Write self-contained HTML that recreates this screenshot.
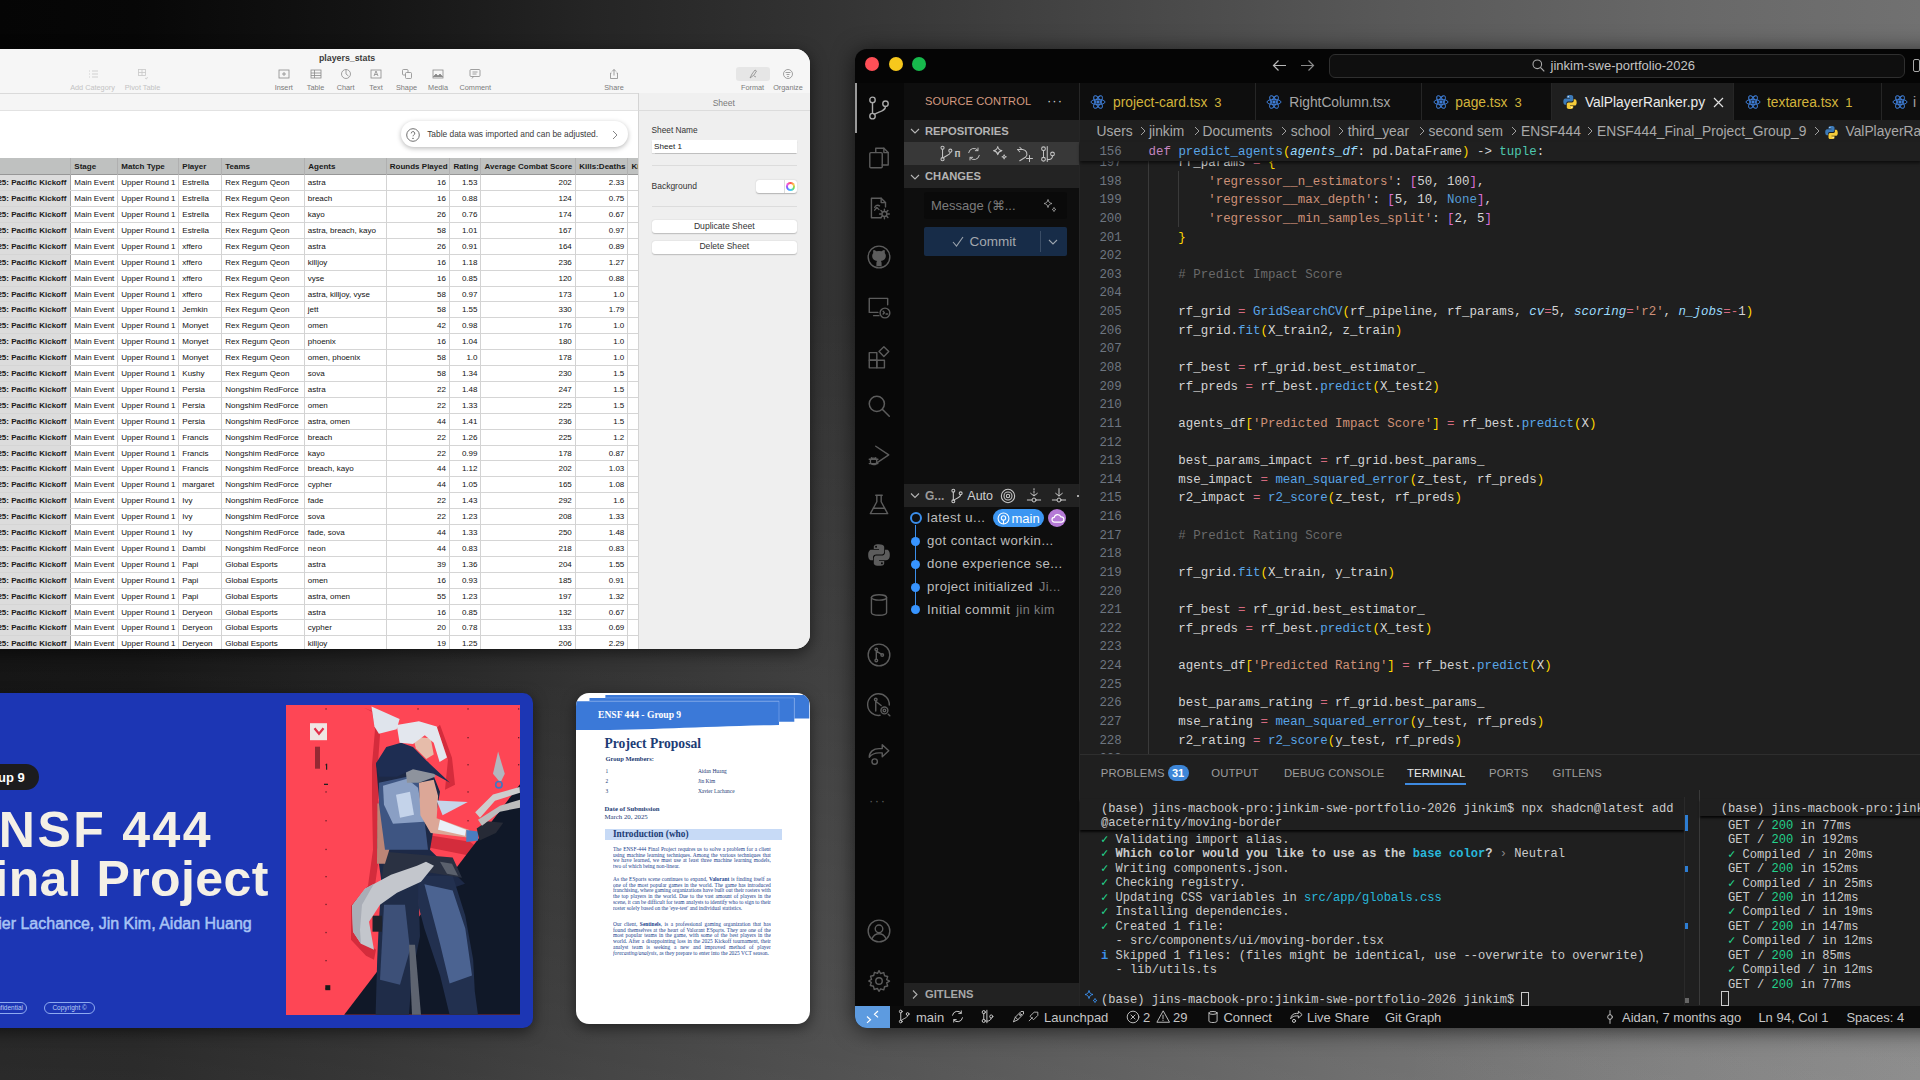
<!DOCTYPE html><html><head><meta charset="utf-8"><title>recreation</title><style>
*{margin:0;padding:0;box-sizing:border-box}
html,body{width:1920px;height:1080px;overflow:hidden}
body{position:relative;font-family:"Liberation Sans",sans-serif;
background:
 radial-gradient(ellipse 520px 320px at 1920px 1080px, rgba(200,200,200,0.12), rgba(200,200,200,0) 100%),
 linear-gradient(180deg, rgba(255,255,255,0) 0%, rgba(255,255,255,0) 28%, rgba(255,255,255,0.065) 62%, rgba(255,255,255,0.15) 100%),
 linear-gradient(90deg,#050505 0%,#070707 7%,#141414 19%,#252525 31%,#333 43%,#454545 57%,#585858 72%,#686868 88%,#717171 100%);}
.a{position:absolute;white-space:nowrap}
.w{position:absolute;overflow:hidden}
.nt{position:absolute;font-size:8px;color:#111;line-height:16px;white-space:nowrap}
.nh{position:absolute;font-size:8px;font-weight:bold;color:#1a1a1a;line-height:16px;white-space:nowrap}
.tl{position:absolute;font-size:7.3px;color:#7b7b7b;white-space:nowrap;transform:translateX(-50%)}
.code{position:absolute;font-family:"Liberation Mono",monospace;font-size:12.45px;line-height:18.63px;white-space:pre;color:#d4d4d4}
.ln{position:absolute;font-family:"Liberation Mono",monospace;font-size:12.45px;line-height:18.63px;color:#6e7681;text-align:right;width:40px;white-space:pre}
.term{position:absolute;font-family:"Liberation Mono",monospace;font-size:12.09px;line-height:14.5px;white-space:pre;color:#cccccc}
.ui{position:absolute;white-space:nowrap;font-family:"Liberation Sans",sans-serif}
svg{position:absolute;overflow:visible}
</style></head><body><div class="w" style="left:-30px;top:49px;width:839.5px;height:600px;background:#fff;border-radius:0 15px 15px 0;box-shadow:0 4px 16px rgba(0,0,0,0.55)"><div style="position:absolute;left:30px;top:0;width:809.5px;height:600px"><div class="a" style="left:0;top:0;width:810px;height:44.8px;background:#f6f6f6;border-bottom:1px solid #dadada"></div><div class="a" style="left:0;top:44.8px;width:810px;height:17.2px;background:#f5f5f5;border-bottom:1px solid #e2e2e2"></div><div class="a" style="left:319px;top:3.5px;font-size:8.8px;font-weight:bold;color:#3b3b3b">players_stats</div><div class="tl" style="left:92.5px;top:33.5px;color:#c3c3c3">Add Category</div><div class="tl" style="left:142.5px;top:33.5px;color:#c3c3c3">Pivot Table</div><div class="tl" style="left:283.75px;top:33.5px;color:#7b7b7b">Insert</div><div class="tl" style="left:315.5px;top:33.5px;color:#7b7b7b">Table</div><div class="tl" style="left:345.6px;top:33.5px;color:#7b7b7b">Chart</div><div class="tl" style="left:376px;top:33.5px;color:#7b7b7b">Text</div><div class="tl" style="left:406.5px;top:33.5px;color:#7b7b7b">Shape</div><div class="tl" style="left:438px;top:33.5px;color:#7b7b7b">Media</div><div class="tl" style="left:475.3px;top:33.5px;color:#7b7b7b">Comment</div><div class="tl" style="left:614px;top:33.5px;color:#7b7b7b">Share</div><div class="tl" style="left:752.5px;top:33.5px;color:#7b7b7b">Format</div><div class="tl" style="left:788px;top:33.5px;color:#7b7b7b">Organize</div><div class="a" style="left:735.5px;top:18px;width:34.5px;height:13.5px;background:#e6e6e6;border-radius:3px"></div><svg style="left:86.5px;top:18.6px" width="12" height="12" viewBox="0 0 12 12" fill="none" stroke="#c8c8c8" stroke-width="0.8"><path d="M2 3h1M5 3h6M2 6h1M5 6h6M2 9h1M5 9h6"/></svg><svg style="left:136.5px;top:18.6px" width="12" height="12" viewBox="0 0 12 12" fill="none" stroke="#c8c8c8" stroke-width="0.8"><rect x="1.5" y="1.5" width="7" height="6"/><path d="M1.5 4.5h7M5 1.5v6M8 10l1.5 1 1-2"/></svg><svg style="left:277.75px;top:18.6px" width="12" height="12" viewBox="0 0 12 12" fill="none" stroke="#8a8a8a" stroke-width="0.8"><rect x="1" y="2" width="10" height="8"/><path d="M6 4v4M4 6h4"/></svg><svg style="left:309.5px;top:18.6px" width="12" height="12" viewBox="0 0 12 12" fill="none" stroke="#8a8a8a" stroke-width="0.8"><rect x="1" y="2" width="10" height="8"/><path d="M1 5h10M1 7.5h10M4.5 2v8"/></svg><svg style="left:339.6px;top:18.6px" width="12" height="12" viewBox="0 0 12 12" fill="none" stroke="#8a8a8a" stroke-width="0.8"><circle cx="6" cy="6" r="4.5"/><path d="M6 1.5v4.5l2.5 2"/></svg><svg style="left:370px;top:18.6px" width="12" height="12" viewBox="0 0 12 12" fill="none" stroke="#8a8a8a" stroke-width="0.8"><rect x="1" y="2" width="10" height="8"/><path d="M4 8l2-5 2 5M4.7 6.5h2.6"/></svg><svg style="left:400.5px;top:18.6px" width="12" height="12" viewBox="0 0 12 12" fill="none" stroke="#8a8a8a" stroke-width="0.8"><rect x="1.5" y="1.5" width="5.5" height="5.5" rx="1"/><rect x="4.5" y="4.5" width="6" height="6" rx="1" fill="#f6f6f6"/></svg><svg style="left:432px;top:18.6px" width="12" height="12" viewBox="0 0 12 12" fill="none" stroke="#8a8a8a" stroke-width="0.8"><rect x="1" y="2" width="10" height="8"/><path d="M1 9l3-3 2 2 2-2 3 3" fill="#8a8a8a"/></svg><svg style="left:469.3px;top:18.6px" width="12" height="12" viewBox="0 0 12 12" fill="none" stroke="#8a8a8a" stroke-width="0.8"><rect x="1" y="1.5" width="10" height="7" rx="1"/><path d="M3 10.5l1.5-2M3.5 4h5M3.5 6h4"/></svg><svg style="left:608px;top:18.6px" width="12" height="12" viewBox="0 0 12 12" fill="none" stroke="#8a8a8a" stroke-width="0.8"><path d="M6 1.5v6M4 3.5l2-2 2 2M3.5 5H2.5v5.5h7V5H8.5"/></svg><svg style="left:746.5px;top:18.6px" width="12" height="12" viewBox="0 0 12 12" fill="none" stroke="#8a8a8a" stroke-width="0.8"><path d="M3 10l2-4 3-4 1.5 1-2.5 4z"/><path d="M7 8l2 1"/></svg><svg style="left:782px;top:18.6px" width="12" height="12" viewBox="0 0 12 12" fill="none" stroke="#8a8a8a" stroke-width="0.8"><circle cx="6" cy="6" r="4.5"/><path d="M3.5 4.5h5M4.5 6.5h3M5.2 8.5h1.6"/></svg><div class="a" style="left:400.6px;top:71.8px;width:227.7px;height:26.4px;background:#fff;border-radius:13.2px;box-shadow:0 1.5px 5px rgba(0,0,0,0.28)"></div><svg style="left:406.3px;top:79px" width="14" height="14" viewBox="0 0 14 14" fill="none" stroke="#707070" stroke-width="1"><circle cx="7" cy="7" r="6.3"/><path d="M5.2 5.4a1.8 1.8 0 1 1 2.6 1.6c-.6.3-.8.6-.8 1.3" /><circle cx="7" cy="10.3" r="0.35" fill="#707070"/></svg><div class="a" style="left:427.2px;top:79.5px;font-size:8.4px;color:#3a3a3a">Table data was imported and can be adjusted.</div><svg style="left:612px;top:80.5px" width="6" height="10" viewBox="0 0 6 10" fill="none" stroke="#777" stroke-width="0.9"><path d="M1 1l4 4-4 4"/></svg><div class="a" style="left:0;top:109px;width:640px;height:16.69999999999999px;background:#bfc1c0;border-bottom:1px solid #979797"></div><div class="a" style="left:0;top:125.69999999999999px;width:70.5px;height:474.3px;background:#dcdcdc;border-right:1px solid #a6a6a6"></div><div class="a" style="left:0;top:141.10px;width:640px;height:0.8px;background:#d5d5d5"></div><div class="a" style="left:0;top:157.00px;width:640px;height:0.8px;background:#d5d5d5"></div><div class="a" style="left:0;top:172.90px;width:640px;height:0.8px;background:#d5d5d5"></div><div class="a" style="left:0;top:188.80px;width:640px;height:0.8px;background:#d5d5d5"></div><div class="a" style="left:0;top:204.70px;width:640px;height:0.8px;background:#d5d5d5"></div><div class="a" style="left:0;top:220.60px;width:640px;height:0.8px;background:#d5d5d5"></div><div class="a" style="left:0;top:236.50px;width:640px;height:0.8px;background:#d5d5d5"></div><div class="a" style="left:0;top:252.40px;width:640px;height:0.8px;background:#d5d5d5"></div><div class="a" style="left:0;top:268.30px;width:640px;height:0.8px;background:#d5d5d5"></div><div class="a" style="left:0;top:284.20px;width:640px;height:0.8px;background:#d5d5d5"></div><div class="a" style="left:0;top:300.10px;width:640px;height:0.8px;background:#d5d5d5"></div><div class="a" style="left:0;top:316.00px;width:640px;height:0.8px;background:#d5d5d5"></div><div class="a" style="left:0;top:331.90px;width:640px;height:0.8px;background:#d5d5d5"></div><div class="a" style="left:0;top:347.80px;width:640px;height:0.8px;background:#d5d5d5"></div><div class="a" style="left:0;top:363.70px;width:640px;height:0.8px;background:#d5d5d5"></div><div class="a" style="left:0;top:379.60px;width:640px;height:0.8px;background:#d5d5d5"></div><div class="a" style="left:0;top:395.50px;width:640px;height:0.8px;background:#d5d5d5"></div><div class="a" style="left:0;top:411.40px;width:640px;height:0.8px;background:#d5d5d5"></div><div class="a" style="left:0;top:427.30px;width:640px;height:0.8px;background:#d5d5d5"></div><div class="a" style="left:0;top:443.20px;width:640px;height:0.8px;background:#d5d5d5"></div><div class="a" style="left:0;top:459.10px;width:640px;height:0.8px;background:#d5d5d5"></div><div class="a" style="left:0;top:475.00px;width:640px;height:0.8px;background:#d5d5d5"></div><div class="a" style="left:0;top:490.90px;width:640px;height:0.8px;background:#d5d5d5"></div><div class="a" style="left:0;top:506.80px;width:640px;height:0.8px;background:#d5d5d5"></div><div class="a" style="left:0;top:522.70px;width:640px;height:0.8px;background:#d5d5d5"></div><div class="a" style="left:0;top:538.60px;width:640px;height:0.8px;background:#d5d5d5"></div><div class="a" style="left:0;top:554.50px;width:640px;height:0.8px;background:#d5d5d5"></div><div class="a" style="left:0;top:570.40px;width:640px;height:0.8px;background:#d5d5d5"></div><div class="a" style="left:0;top:586.30px;width:640px;height:0.8px;background:#d5d5d5"></div><div class="a" style="left:0;top:602.20px;width:640px;height:0.8px;background:#d5d5d5"></div><div class="a" style="left:117.0px;top:109px;width:0.8px;height:491px;background:#d3d3d3"></div><div class="a" style="left:178.0px;top:109px;width:0.8px;height:491px;background:#d3d3d3"></div><div class="a" style="left:221.0px;top:109px;width:0.8px;height:491px;background:#d3d3d3"></div><div class="a" style="left:304.0px;top:109px;width:0.8px;height:491px;background:#d3d3d3"></div><div class="a" style="left:385.5px;top:109px;width:0.8px;height:491px;background:#d3d3d3"></div><div class="a" style="left:449.1px;top:109px;width:0.8px;height:491px;background:#d3d3d3"></div><div class="a" style="left:480.2px;top:109px;width:0.8px;height:491px;background:#d3d3d3"></div><div class="a" style="left:575.0px;top:109px;width:0.8px;height:491px;background:#d3d3d3"></div><div class="a" style="left:627.1px;top:109px;width:0.8px;height:491px;background:#d3d3d3"></div><div class="a" style="left:70.0px;top:109px;width:0.8px;height:16.69999999999999px;background:#b0b0b0"></div><div class="a" style="left:117.0px;top:109px;width:0.8px;height:16.69999999999999px;background:#b0b0b0"></div><div class="a" style="left:178.0px;top:109px;width:0.8px;height:16.69999999999999px;background:#b0b0b0"></div><div class="a" style="left:221.0px;top:109px;width:0.8px;height:16.69999999999999px;background:#b0b0b0"></div><div class="a" style="left:304.0px;top:109px;width:0.8px;height:16.69999999999999px;background:#b0b0b0"></div><div class="a" style="left:385.5px;top:109px;width:0.8px;height:16.69999999999999px;background:#b0b0b0"></div><div class="a" style="left:449.1px;top:109px;width:0.8px;height:16.69999999999999px;background:#b0b0b0"></div><div class="a" style="left:480.2px;top:109px;width:0.8px;height:16.69999999999999px;background:#b0b0b0"></div><div class="a" style="left:575.0px;top:109px;width:0.8px;height:16.69999999999999px;background:#b0b0b0"></div><div class="a" style="left:627.1px;top:109px;width:0.8px;height:16.69999999999999px;background:#b0b0b0"></div><div class="nh" style="left:74.3px;top:110.2px">Stage</div><div class="nh" style="left:121.3px;top:110.2px">Match Type</div><div class="nh" style="left:182.3px;top:110.2px">Player</div><div class="nh" style="left:225.3px;top:110.2px">Teams</div><div class="nh" style="left:308.3px;top:110.2px">Agents</div><div class="nh" style="left:389.8px;top:110.2px">Rounds Played</div><div class="nh" style="left:453.40000000000003px;top:110.2px">Rating</div><div class="nh" style="left:484.5px;top:110.2px">Average Combat Score</div><div class="nh" style="left:579.3px;top:110.2px">Kills:Deaths</div><div class="nh" style="left:631.4px;top:110.2px">Kills</div><div class="nh" style="right:743.2px;top:126.19999999999999px">VCT 2025: Pacific Kickoff</div><div class="nt" style="left:74.3px;top:126.19999999999999px">Main Event</div><div class="nt" style="left:121.3px;top:126.19999999999999px">Upper Round 1</div><div class="nt" style="left:182.3px;top:126.19999999999999px">Estrella</div><div class="nt" style="left:225.3px;top:126.19999999999999px">Rex Regum Qeon</div><div class="nt" style="left:307.8px;top:126.19999999999999px">astra</div><div class="nt" style="right:363.5px;top:126.19999999999999px">16</div><div class="nt" style="right:332.0px;top:126.19999999999999px">1.53</div><div class="nt" style="right:237.70000000000005px;top:126.19999999999999px">202</div><div class="nt" style="right:185.20000000000005px;top:126.19999999999999px">2.33</div><div class="nh" style="right:743.2px;top:142.1px">VCT 2025: Pacific Kickoff</div><div class="nt" style="left:74.3px;top:142.1px">Main Event</div><div class="nt" style="left:121.3px;top:142.1px">Upper Round 1</div><div class="nt" style="left:182.3px;top:142.1px">Estrella</div><div class="nt" style="left:225.3px;top:142.1px">Rex Regum Qeon</div><div class="nt" style="left:307.8px;top:142.1px">breach</div><div class="nt" style="right:363.5px;top:142.1px">16</div><div class="nt" style="right:332.0px;top:142.1px">0.88</div><div class="nt" style="right:237.70000000000005px;top:142.1px">124</div><div class="nt" style="right:185.20000000000005px;top:142.1px">0.75</div><div class="nh" style="right:743.2px;top:158.0px">VCT 2025: Pacific Kickoff</div><div class="nt" style="left:74.3px;top:158.0px">Main Event</div><div class="nt" style="left:121.3px;top:158.0px">Upper Round 1</div><div class="nt" style="left:182.3px;top:158.0px">Estrella</div><div class="nt" style="left:225.3px;top:158.0px">Rex Regum Qeon</div><div class="nt" style="left:307.8px;top:158.0px">kayo</div><div class="nt" style="right:363.5px;top:158.0px">26</div><div class="nt" style="right:332.0px;top:158.0px">0.76</div><div class="nt" style="right:237.70000000000005px;top:158.0px">174</div><div class="nt" style="right:185.20000000000005px;top:158.0px">0.67</div><div class="nh" style="right:743.2px;top:173.89999999999998px">VCT 2025: Pacific Kickoff</div><div class="nt" style="left:74.3px;top:173.89999999999998px">Main Event</div><div class="nt" style="left:121.3px;top:173.89999999999998px">Upper Round 1</div><div class="nt" style="left:182.3px;top:173.89999999999998px">Estrella</div><div class="nt" style="left:225.3px;top:173.89999999999998px">Rex Regum Qeon</div><div class="nt" style="left:307.8px;top:173.89999999999998px">astra, breach, kayo</div><div class="nt" style="right:363.5px;top:173.89999999999998px">58</div><div class="nt" style="right:332.0px;top:173.89999999999998px">1.01</div><div class="nt" style="right:237.70000000000005px;top:173.89999999999998px">167</div><div class="nt" style="right:185.20000000000005px;top:173.89999999999998px">0.97</div><div class="nh" style="right:743.2px;top:189.79999999999998px">VCT 2025: Pacific Kickoff</div><div class="nt" style="left:74.3px;top:189.79999999999998px">Main Event</div><div class="nt" style="left:121.3px;top:189.79999999999998px">Upper Round 1</div><div class="nt" style="left:182.3px;top:189.79999999999998px">xffero</div><div class="nt" style="left:225.3px;top:189.79999999999998px">Rex Regum Qeon</div><div class="nt" style="left:307.8px;top:189.79999999999998px">astra</div><div class="nt" style="right:363.5px;top:189.79999999999998px">26</div><div class="nt" style="right:332.0px;top:189.79999999999998px">0.91</div><div class="nt" style="right:237.70000000000005px;top:189.79999999999998px">164</div><div class="nt" style="right:185.20000000000005px;top:189.79999999999998px">0.89</div><div class="nh" style="right:743.2px;top:205.7px">VCT 2025: Pacific Kickoff</div><div class="nt" style="left:74.3px;top:205.7px">Main Event</div><div class="nt" style="left:121.3px;top:205.7px">Upper Round 1</div><div class="nt" style="left:182.3px;top:205.7px">xffero</div><div class="nt" style="left:225.3px;top:205.7px">Rex Regum Qeon</div><div class="nt" style="left:307.8px;top:205.7px">killjoy</div><div class="nt" style="right:363.5px;top:205.7px">16</div><div class="nt" style="right:332.0px;top:205.7px">1.18</div><div class="nt" style="right:237.70000000000005px;top:205.7px">236</div><div class="nt" style="right:185.20000000000005px;top:205.7px">1.27</div><div class="nh" style="right:743.2px;top:221.6px">VCT 2025: Pacific Kickoff</div><div class="nt" style="left:74.3px;top:221.6px">Main Event</div><div class="nt" style="left:121.3px;top:221.6px">Upper Round 1</div><div class="nt" style="left:182.3px;top:221.6px">xffero</div><div class="nt" style="left:225.3px;top:221.6px">Rex Regum Qeon</div><div class="nt" style="left:307.8px;top:221.6px">vyse</div><div class="nt" style="right:363.5px;top:221.6px">16</div><div class="nt" style="right:332.0px;top:221.6px">0.85</div><div class="nt" style="right:237.70000000000005px;top:221.6px">120</div><div class="nt" style="right:185.20000000000005px;top:221.6px">0.88</div><div class="nh" style="right:743.2px;top:237.5px">VCT 2025: Pacific Kickoff</div><div class="nt" style="left:74.3px;top:237.5px">Main Event</div><div class="nt" style="left:121.3px;top:237.5px">Upper Round 1</div><div class="nt" style="left:182.3px;top:237.5px">xffero</div><div class="nt" style="left:225.3px;top:237.5px">Rex Regum Qeon</div><div class="nt" style="left:307.8px;top:237.5px">astra, killjoy, vyse</div><div class="nt" style="right:363.5px;top:237.5px">58</div><div class="nt" style="right:332.0px;top:237.5px">0.97</div><div class="nt" style="right:237.70000000000005px;top:237.5px">173</div><div class="nt" style="right:185.20000000000005px;top:237.5px">1.0</div><div class="nh" style="right:743.2px;top:253.39999999999998px">VCT 2025: Pacific Kickoff</div><div class="nt" style="left:74.3px;top:253.39999999999998px">Main Event</div><div class="nt" style="left:121.3px;top:253.39999999999998px">Upper Round 1</div><div class="nt" style="left:182.3px;top:253.39999999999998px">Jemkin</div><div class="nt" style="left:225.3px;top:253.39999999999998px">Rex Regum Qeon</div><div class="nt" style="left:307.8px;top:253.39999999999998px">jett</div><div class="nt" style="right:363.5px;top:253.39999999999998px">58</div><div class="nt" style="right:332.0px;top:253.39999999999998px">1.55</div><div class="nt" style="right:237.70000000000005px;top:253.39999999999998px">330</div><div class="nt" style="right:185.20000000000005px;top:253.39999999999998px">1.79</div><div class="nh" style="right:743.2px;top:269.29999999999995px">VCT 2025: Pacific Kickoff</div><div class="nt" style="left:74.3px;top:269.29999999999995px">Main Event</div><div class="nt" style="left:121.3px;top:269.29999999999995px">Upper Round 1</div><div class="nt" style="left:182.3px;top:269.29999999999995px">Monyet</div><div class="nt" style="left:225.3px;top:269.29999999999995px">Rex Regum Qeon</div><div class="nt" style="left:307.8px;top:269.29999999999995px">omen</div><div class="nt" style="right:363.5px;top:269.29999999999995px">42</div><div class="nt" style="right:332.0px;top:269.29999999999995px">0.98</div><div class="nt" style="right:237.70000000000005px;top:269.29999999999995px">176</div><div class="nt" style="right:185.20000000000005px;top:269.29999999999995px">1.0</div><div class="nh" style="right:743.2px;top:285.2px">VCT 2025: Pacific Kickoff</div><div class="nt" style="left:74.3px;top:285.2px">Main Event</div><div class="nt" style="left:121.3px;top:285.2px">Upper Round 1</div><div class="nt" style="left:182.3px;top:285.2px">Monyet</div><div class="nt" style="left:225.3px;top:285.2px">Rex Regum Qeon</div><div class="nt" style="left:307.8px;top:285.2px">phoenix</div><div class="nt" style="right:363.5px;top:285.2px">16</div><div class="nt" style="right:332.0px;top:285.2px">1.04</div><div class="nt" style="right:237.70000000000005px;top:285.2px">180</div><div class="nt" style="right:185.20000000000005px;top:285.2px">1.0</div><div class="nh" style="right:743.2px;top:301.1px">VCT 2025: Pacific Kickoff</div><div class="nt" style="left:74.3px;top:301.1px">Main Event</div><div class="nt" style="left:121.3px;top:301.1px">Upper Round 1</div><div class="nt" style="left:182.3px;top:301.1px">Monyet</div><div class="nt" style="left:225.3px;top:301.1px">Rex Regum Qeon</div><div class="nt" style="left:307.8px;top:301.1px">omen, phoenix</div><div class="nt" style="right:363.5px;top:301.1px">58</div><div class="nt" style="right:332.0px;top:301.1px">1.0</div><div class="nt" style="right:237.70000000000005px;top:301.1px">178</div><div class="nt" style="right:185.20000000000005px;top:301.1px">1.0</div><div class="nh" style="right:743.2px;top:317.0px">VCT 2025: Pacific Kickoff</div><div class="nt" style="left:74.3px;top:317.0px">Main Event</div><div class="nt" style="left:121.3px;top:317.0px">Upper Round 1</div><div class="nt" style="left:182.3px;top:317.0px">Kushy</div><div class="nt" style="left:225.3px;top:317.0px">Rex Regum Qeon</div><div class="nt" style="left:307.8px;top:317.0px">sova</div><div class="nt" style="right:363.5px;top:317.0px">58</div><div class="nt" style="right:332.0px;top:317.0px">1.34</div><div class="nt" style="right:237.70000000000005px;top:317.0px">230</div><div class="nt" style="right:185.20000000000005px;top:317.0px">1.5</div><div class="nh" style="right:743.2px;top:332.9px">VCT 2025: Pacific Kickoff</div><div class="nt" style="left:74.3px;top:332.9px">Main Event</div><div class="nt" style="left:121.3px;top:332.9px">Upper Round 1</div><div class="nt" style="left:182.3px;top:332.9px">Persia</div><div class="nt" style="left:225.3px;top:332.9px">Nongshim RedForce</div><div class="nt" style="left:307.8px;top:332.9px">astra</div><div class="nt" style="right:363.5px;top:332.9px">22</div><div class="nt" style="right:332.0px;top:332.9px">1.48</div><div class="nt" style="right:237.70000000000005px;top:332.9px">247</div><div class="nt" style="right:185.20000000000005px;top:332.9px">1.5</div><div class="nh" style="right:743.2px;top:348.79999999999995px">VCT 2025: Pacific Kickoff</div><div class="nt" style="left:74.3px;top:348.79999999999995px">Main Event</div><div class="nt" style="left:121.3px;top:348.79999999999995px">Upper Round 1</div><div class="nt" style="left:182.3px;top:348.79999999999995px">Persia</div><div class="nt" style="left:225.3px;top:348.79999999999995px">Nongshim RedForce</div><div class="nt" style="left:307.8px;top:348.79999999999995px">omen</div><div class="nt" style="right:363.5px;top:348.79999999999995px">22</div><div class="nt" style="right:332.0px;top:348.79999999999995px">1.33</div><div class="nt" style="right:237.70000000000005px;top:348.79999999999995px">225</div><div class="nt" style="right:185.20000000000005px;top:348.79999999999995px">1.5</div><div class="nh" style="right:743.2px;top:364.7px">VCT 2025: Pacific Kickoff</div><div class="nt" style="left:74.3px;top:364.7px">Main Event</div><div class="nt" style="left:121.3px;top:364.7px">Upper Round 1</div><div class="nt" style="left:182.3px;top:364.7px">Persia</div><div class="nt" style="left:225.3px;top:364.7px">Nongshim RedForce</div><div class="nt" style="left:307.8px;top:364.7px">astra, omen</div><div class="nt" style="right:363.5px;top:364.7px">44</div><div class="nt" style="right:332.0px;top:364.7px">1.41</div><div class="nt" style="right:237.70000000000005px;top:364.7px">236</div><div class="nt" style="right:185.20000000000005px;top:364.7px">1.5</div><div class="nh" style="right:743.2px;top:380.6px">VCT 2025: Pacific Kickoff</div><div class="nt" style="left:74.3px;top:380.6px">Main Event</div><div class="nt" style="left:121.3px;top:380.6px">Upper Round 1</div><div class="nt" style="left:182.3px;top:380.6px">Francis</div><div class="nt" style="left:225.3px;top:380.6px">Nongshim RedForce</div><div class="nt" style="left:307.8px;top:380.6px">breach</div><div class="nt" style="right:363.5px;top:380.6px">22</div><div class="nt" style="right:332.0px;top:380.6px">1.26</div><div class="nt" style="right:237.70000000000005px;top:380.6px">225</div><div class="nt" style="right:185.20000000000005px;top:380.6px">1.2</div><div class="nh" style="right:743.2px;top:396.5px">VCT 2025: Pacific Kickoff</div><div class="nt" style="left:74.3px;top:396.5px">Main Event</div><div class="nt" style="left:121.3px;top:396.5px">Upper Round 1</div><div class="nt" style="left:182.3px;top:396.5px">Francis</div><div class="nt" style="left:225.3px;top:396.5px">Nongshim RedForce</div><div class="nt" style="left:307.8px;top:396.5px">kayo</div><div class="nt" style="right:363.5px;top:396.5px">22</div><div class="nt" style="right:332.0px;top:396.5px">0.99</div><div class="nt" style="right:237.70000000000005px;top:396.5px">178</div><div class="nt" style="right:185.20000000000005px;top:396.5px">0.87</div><div class="nh" style="right:743.2px;top:412.4px">VCT 2025: Pacific Kickoff</div><div class="nt" style="left:74.3px;top:412.4px">Main Event</div><div class="nt" style="left:121.3px;top:412.4px">Upper Round 1</div><div class="nt" style="left:182.3px;top:412.4px">Francis</div><div class="nt" style="left:225.3px;top:412.4px">Nongshim RedForce</div><div class="nt" style="left:307.8px;top:412.4px">breach, kayo</div><div class="nt" style="right:363.5px;top:412.4px">44</div><div class="nt" style="right:332.0px;top:412.4px">1.12</div><div class="nt" style="right:237.70000000000005px;top:412.4px">202</div><div class="nt" style="right:185.20000000000005px;top:412.4px">1.03</div><div class="nh" style="right:743.2px;top:428.3px">VCT 2025: Pacific Kickoff</div><div class="nt" style="left:74.3px;top:428.3px">Main Event</div><div class="nt" style="left:121.3px;top:428.3px">Upper Round 1</div><div class="nt" style="left:182.3px;top:428.3px">margaret</div><div class="nt" style="left:225.3px;top:428.3px">Nongshim RedForce</div><div class="nt" style="left:307.8px;top:428.3px">cypher</div><div class="nt" style="right:363.5px;top:428.3px">44</div><div class="nt" style="right:332.0px;top:428.3px">1.05</div><div class="nt" style="right:237.70000000000005px;top:428.3px">165</div><div class="nt" style="right:185.20000000000005px;top:428.3px">1.08</div><div class="nh" style="right:743.2px;top:444.2px">VCT 2025: Pacific Kickoff</div><div class="nt" style="left:74.3px;top:444.2px">Main Event</div><div class="nt" style="left:121.3px;top:444.2px">Upper Round 1</div><div class="nt" style="left:182.3px;top:444.2px">Ivy</div><div class="nt" style="left:225.3px;top:444.2px">Nongshim RedForce</div><div class="nt" style="left:307.8px;top:444.2px">fade</div><div class="nt" style="right:363.5px;top:444.2px">22</div><div class="nt" style="right:332.0px;top:444.2px">1.43</div><div class="nt" style="right:237.70000000000005px;top:444.2px">292</div><div class="nt" style="right:185.20000000000005px;top:444.2px">1.6</div><div class="nh" style="right:743.2px;top:460.1px">VCT 2025: Pacific Kickoff</div><div class="nt" style="left:74.3px;top:460.1px">Main Event</div><div class="nt" style="left:121.3px;top:460.1px">Upper Round 1</div><div class="nt" style="left:182.3px;top:460.1px">Ivy</div><div class="nt" style="left:225.3px;top:460.1px">Nongshim RedForce</div><div class="nt" style="left:307.8px;top:460.1px">sova</div><div class="nt" style="right:363.5px;top:460.1px">22</div><div class="nt" style="right:332.0px;top:460.1px">1.23</div><div class="nt" style="right:237.70000000000005px;top:460.1px">208</div><div class="nt" style="right:185.20000000000005px;top:460.1px">1.33</div><div class="nh" style="right:743.2px;top:476.0px">VCT 2025: Pacific Kickoff</div><div class="nt" style="left:74.3px;top:476.0px">Main Event</div><div class="nt" style="left:121.3px;top:476.0px">Upper Round 1</div><div class="nt" style="left:182.3px;top:476.0px">Ivy</div><div class="nt" style="left:225.3px;top:476.0px">Nongshim RedForce</div><div class="nt" style="left:307.8px;top:476.0px">fade, sova</div><div class="nt" style="right:363.5px;top:476.0px">44</div><div class="nt" style="right:332.0px;top:476.0px">1.33</div><div class="nt" style="right:237.70000000000005px;top:476.0px">250</div><div class="nt" style="right:185.20000000000005px;top:476.0px">1.48</div><div class="nh" style="right:743.2px;top:491.9px">VCT 2025: Pacific Kickoff</div><div class="nt" style="left:74.3px;top:491.9px">Main Event</div><div class="nt" style="left:121.3px;top:491.9px">Upper Round 1</div><div class="nt" style="left:182.3px;top:491.9px">Dambi</div><div class="nt" style="left:225.3px;top:491.9px">Nongshim RedForce</div><div class="nt" style="left:307.8px;top:491.9px">neon</div><div class="nt" style="right:363.5px;top:491.9px">44</div><div class="nt" style="right:332.0px;top:491.9px">0.83</div><div class="nt" style="right:237.70000000000005px;top:491.9px">218</div><div class="nt" style="right:185.20000000000005px;top:491.9px">0.83</div><div class="nh" style="right:743.2px;top:507.8px">VCT 2025: Pacific Kickoff</div><div class="nt" style="left:74.3px;top:507.8px">Main Event</div><div class="nt" style="left:121.3px;top:507.8px">Upper Round 1</div><div class="nt" style="left:182.3px;top:507.8px">Papi</div><div class="nt" style="left:225.3px;top:507.8px">Global Esports</div><div class="nt" style="left:307.8px;top:507.8px">astra</div><div class="nt" style="right:363.5px;top:507.8px">39</div><div class="nt" style="right:332.0px;top:507.8px">1.36</div><div class="nt" style="right:237.70000000000005px;top:507.8px">204</div><div class="nt" style="right:185.20000000000005px;top:507.8px">1.55</div><div class="nh" style="right:743.2px;top:523.7px">VCT 2025: Pacific Kickoff</div><div class="nt" style="left:74.3px;top:523.7px">Main Event</div><div class="nt" style="left:121.3px;top:523.7px">Upper Round 1</div><div class="nt" style="left:182.3px;top:523.7px">Papi</div><div class="nt" style="left:225.3px;top:523.7px">Global Esports</div><div class="nt" style="left:307.8px;top:523.7px">omen</div><div class="nt" style="right:363.5px;top:523.7px">16</div><div class="nt" style="right:332.0px;top:523.7px">0.93</div><div class="nt" style="right:237.70000000000005px;top:523.7px">185</div><div class="nt" style="right:185.20000000000005px;top:523.7px">0.91</div><div class="nh" style="right:743.2px;top:539.6px">VCT 2025: Pacific Kickoff</div><div class="nt" style="left:74.3px;top:539.6px">Main Event</div><div class="nt" style="left:121.3px;top:539.6px">Upper Round 1</div><div class="nt" style="left:182.3px;top:539.6px">Papi</div><div class="nt" style="left:225.3px;top:539.6px">Global Esports</div><div class="nt" style="left:307.8px;top:539.6px">astra, omen</div><div class="nt" style="right:363.5px;top:539.6px">55</div><div class="nt" style="right:332.0px;top:539.6px">1.23</div><div class="nt" style="right:237.70000000000005px;top:539.6px">197</div><div class="nt" style="right:185.20000000000005px;top:539.6px">1.32</div><div class="nh" style="right:743.2px;top:555.5px">VCT 2025: Pacific Kickoff</div><div class="nt" style="left:74.3px;top:555.5px">Main Event</div><div class="nt" style="left:121.3px;top:555.5px">Upper Round 1</div><div class="nt" style="left:182.3px;top:555.5px">Deryeon</div><div class="nt" style="left:225.3px;top:555.5px">Global Esports</div><div class="nt" style="left:307.8px;top:555.5px">astra</div><div class="nt" style="right:363.5px;top:555.5px">16</div><div class="nt" style="right:332.0px;top:555.5px">0.85</div><div class="nt" style="right:237.70000000000005px;top:555.5px">132</div><div class="nt" style="right:185.20000000000005px;top:555.5px">0.67</div><div class="nh" style="right:743.2px;top:571.4px">VCT 2025: Pacific Kickoff</div><div class="nt" style="left:74.3px;top:571.4px">Main Event</div><div class="nt" style="left:121.3px;top:571.4px">Upper Round 1</div><div class="nt" style="left:182.3px;top:571.4px">Deryeon</div><div class="nt" style="left:225.3px;top:571.4px">Global Esports</div><div class="nt" style="left:307.8px;top:571.4px">cypher</div><div class="nt" style="right:363.5px;top:571.4px">20</div><div class="nt" style="right:332.0px;top:571.4px">0.78</div><div class="nt" style="right:237.70000000000005px;top:571.4px">133</div><div class="nt" style="right:185.20000000000005px;top:571.4px">0.69</div><div class="nh" style="right:743.2px;top:587.3px">VCT 2025: Pacific Kickoff</div><div class="nt" style="left:74.3px;top:587.3px">Main Event</div><div class="nt" style="left:121.3px;top:587.3px">Upper Round 1</div><div class="nt" style="left:182.3px;top:587.3px">Deryeon</div><div class="nt" style="left:225.3px;top:587.3px">Global Esports</div><div class="nt" style="left:307.8px;top:587.3px">killjoy</div><div class="nt" style="right:363.5px;top:587.3px">19</div><div class="nt" style="right:332.0px;top:587.3px">1.25</div><div class="nt" style="right:237.70000000000005px;top:587.3px">206</div><div class="nt" style="right:185.20000000000005px;top:587.3px">2.29</div><div class="a" style="left:638.4px;top:44px;width:172px;height:556px;background:#efefef;border-left:1px solid #d4d4d4"></div><div class="a" style="left:638.4px;top:44px;width:172px;height:18px;border-bottom:1px solid #dcdcdc;border-left:1px solid #d4d4d4;background:#f0f0f0"></div><div class="a" style="left:712.7px;top:48.6px;font-size:8.5px;color:#7a7a7a">Sheet</div><div class="a" style="left:651.5px;top:75.5px;font-size:8.3px;color:#333">Sheet Name</div><div class="a" style="left:651.5px;top:91px;width:145px;height:12.6px;background:#fff;box-shadow:0 0.5px 1px rgba(0,0,0,0.2)"></div><div class="a" style="left:654px;top:92.6px;font-size:8.1px;color:#222">Sheet 1</div><div class="a" style="left:651.5px;top:116px;width:145.5px;height:1px;background:#dcdcdc"></div><div class="a" style="left:651.5px;top:132.4px;font-size:8.5px;color:#333">Background</div><div class="a" style="left:755.5px;top:131px;width:41px;height:12.8px;background:#fff;border-radius:3px;box-shadow:0 0.5px 1.2px rgba(0,0,0,0.25)"></div><div class="a" style="left:783.5px;top:131px;width:0.6px;height:12.8px;background:#ddd"></div><div class="a" style="left:785.5px;top:132.5px;width:9.5px;height:9.5px;border-radius:50%;background:conic-gradient(#f55,#fc4,#6d6,#4cf,#66f,#e5e,#f55)"></div><div class="a" style="left:787.6px;top:134.6px;width:5.3px;height:5.3px;border-radius:50%;background:#fff"></div><div class="a" style="left:651.5px;top:157.3px;width:145.5px;height:1px;background:#dcdcdc"></div><div class="a" style="left:651.5px;top:171.3px;width:145.5px;height:12.9px;background:#fff;border-radius:3px;box-shadow:0 0.5px 1.2px rgba(0,0,0,0.22)"></div><div class="a" style="left:651.5px;top:171.8px;width:145.5px;text-align:center;font-size:8.6px;color:#333">Duplicate Sheet</div><div class="a" style="left:651.5px;top:191.8px;width:145.5px;height:12.8px;background:#fff;border-radius:3px;box-shadow:0 0.5px 1.2px rgba(0,0,0,0.22)"></div><div class="a" style="left:651.5px;top:192.3px;width:145.5px;text-align:center;font-size:8.6px;color:#333">Delete Sheet</div></div></div><div class="w" style="left:-20px;top:693px;width:552.6px;height:334.5px;background:#1c36b4;border-radius:0 10px 10px 0;box-shadow:0 4px 14px rgba(0,0,0,0.5)"><div style="position:absolute;left:20px;top:-693px;width:1920px;height:1080px"><div class="a" style="left:-60px;top:764px;width:99.3px;height:26px;border-radius:13px;background:#1c1c1e"></div><div class="ui" style="right:1895.3px;top:769.5px;font-size:13px;font-weight:bold;color:#fff">Group 9</div><div class="ui" style="right:1707px;top:800px;font-size:50px;font-weight:bold;color:#f4f0e6;letter-spacing:2.4px;line-height:60px">ENSF 444</div><div class="ui" style="right:1651.3px;top:848.5px;font-size:50px;font-weight:bold;color:#f4f0e6;letter-spacing:0.4px;line-height:60px">Final Project</div><div class="ui" style="right:1668.3px;top:912.5px;font-size:16px;-webkit-text-stroke:0.5px #a7c3f4;color:#a7c3f4;line-height:22px">Xavier Lachance, Jin Kim, Aidan Huang</div><div class="a" style="left:-40px;top:1002.3px;width:66.7px;height:12px;border:1px solid #8eaaf0;border-radius:6px"></div><div class="ui" style="right:1897px;top:1004px;font-size:6.5px;color:#b9ccf5">Confidential</div><div class="a" style="left:44.3px;top:1002.3px;width:50.7px;height:12px;border:1px solid #8eaaf0;border-radius:6px"></div><div class="ui" style="left:44.3px;width:50.7px;text-align:center;top:1004px;font-size:6.5px;color:#b9ccf5">Copyright ©</div><div class="w" style="left:286px;top:705.3px;width:234.2px;height:309.7px;background:#fe4655"><svg style="left:0;top:0" width="234.2" height="309.7" viewBox="0 0 234.2 309.7"><rect x="39.4" y="3.3" width="1.3" height="1.3" fill="#6a1e28"/><rect x="39.4" y="32.0" width="1.3" height="1.3" fill="#6a1e28"/><rect x="39.4" y="59.1" width="1.3" height="1.3" fill="#6a1e28"/><rect x="39.4" y="86.3" width="1.3" height="1.3" fill="#6a1e28"/><rect x="39.4" y="115.1" width="1.3" height="1.3" fill="#6a1e28"/><rect x="39.4" y="143.8" width="1.3" height="1.3" fill="#6a1e28"/><rect x="39.4" y="171.0" width="1.3" height="1.3" fill="#6a1e28"/><rect x="39.4" y="198.8" width="1.3" height="1.3" fill="#6a1e28"/><rect x="39.4" y="226.9" width="1.3" height="1.3" fill="#6a1e28"/><rect x="39.4" y="255.0" width="1.3" height="1.3" fill="#6a1e28"/><rect x="39.4" y="282.8" width="1.3" height="1.3" fill="#6a1e28"/><rect x="131.4" y="3.3" width="1.3" height="1.3" fill="#6a1e28"/><rect x="131.4" y="32.0" width="1.3" height="1.3" fill="#6a1e28"/><rect x="131.4" y="59.1" width="1.3" height="1.3" fill="#6a1e28"/><rect x="131.4" y="86.3" width="1.3" height="1.3" fill="#6a1e28"/><rect x="131.4" y="115.1" width="1.3" height="1.3" fill="#6a1e28"/><rect x="131.4" y="143.8" width="1.3" height="1.3" fill="#6a1e28"/><rect x="131.4" y="171.0" width="1.3" height="1.3" fill="#6a1e28"/><rect x="131.4" y="198.8" width="1.3" height="1.3" fill="#6a1e28"/><rect x="131.4" y="226.9" width="1.3" height="1.3" fill="#6a1e28"/><rect x="131.4" y="255.0" width="1.3" height="1.3" fill="#6a1e28"/><rect x="131.4" y="282.8" width="1.3" height="1.3" fill="#6a1e28"/><rect x="181.4" y="3.3" width="1.3" height="1.3" fill="#6a1e28"/><rect x="181.4" y="32.0" width="1.3" height="1.3" fill="#6a1e28"/><rect x="181.4" y="59.1" width="1.3" height="1.3" fill="#6a1e28"/><rect x="181.4" y="86.3" width="1.3" height="1.3" fill="#6a1e28"/><rect x="181.4" y="115.1" width="1.3" height="1.3" fill="#6a1e28"/><rect x="181.4" y="143.8" width="1.3" height="1.3" fill="#6a1e28"/><rect x="181.4" y="171.0" width="1.3" height="1.3" fill="#6a1e28"/><rect x="181.4" y="198.8" width="1.3" height="1.3" fill="#6a1e28"/><rect x="181.4" y="226.9" width="1.3" height="1.3" fill="#6a1e28"/><rect x="181.4" y="255.0" width="1.3" height="1.3" fill="#6a1e28"/><rect x="181.4" y="282.8" width="1.3" height="1.3" fill="#6a1e28"/><rect x="232.0" y="3.3" width="1.3" height="1.3" fill="#6a1e28"/><rect x="232.0" y="32.0" width="1.3" height="1.3" fill="#6a1e28"/><rect x="232.0" y="59.1" width="1.3" height="1.3" fill="#6a1e28"/><rect x="232.0" y="86.3" width="1.3" height="1.3" fill="#6a1e28"/><rect x="232.0" y="115.1" width="1.3" height="1.3" fill="#6a1e28"/><rect x="232.0" y="143.8" width="1.3" height="1.3" fill="#6a1e28"/><rect x="232.0" y="171.0" width="1.3" height="1.3" fill="#6a1e28"/><rect x="232.0" y="198.8" width="1.3" height="1.3" fill="#6a1e28"/><rect x="232.0" y="226.9" width="1.3" height="1.3" fill="#6a1e28"/><rect x="232.0" y="255.0" width="1.3" height="1.3" fill="#6a1e28"/><rect x="232.0" y="282.8" width="1.3" height="1.3" fill="#6a1e28"/><rect x="24" y="18.200000000000045" width="17" height="17" fill="#efe6e3"/><path d="M28.5 23.200000000000045l4.5 5.5 4.5-5.5" stroke="#e2304a" stroke-width="2.2" fill="none"/><rect x="29" y="41.700000000000045" width="5" height="22" fill="#5a1a22" opacity="0.65"/><rect x="40" y="58.700000000000045" width="1.2" height="6" fill="#222"/><rect x="38" y="78.70000000000005" width="4" height="1.3" fill="#222"/><rect x="39.30000000000001" y="280.20000000000005" width="5" height="5" fill="#1a1a1a"/><polygon points="78.0,2.7 86.0,6.7 89.0,24.7 86.0,59.7 86.0,94.7 87.0,144.7 82.0,180.7 65.0,200.7 65.0,234.7 80.0,250.7 88.0,254.7 90.0,244.7 72.0,230.7 71.0,204.7 88.0,187.7 94.0,144.7 92.0,94.7 92.0,57.7 94.0,29.7 88.0,6.7" fill="#d42c3c"/><polygon points="154.0,19.7 166.0,52.7 169.0,79.7 159.0,84.7 162.0,54.7 151.0,22.7" fill="#d42c3c"/><polygon points="140.0,129.7 184.0,136.7 192.0,142.7 184.0,150.7 144.0,142.7" fill="#d42c3c"/><polygon points="58.2,309.7 234.2,79.1 234.2,309.7" fill="#101828"/><polygon points="90.0,57.7 142.0,56.7 154.0,86.7 144.0,144.7 179.0,178.7 132.0,194.7 98.0,194.7 91.0,144.7 93.0,94.7" fill="#1d2946"/><polygon points="95.9,172.7 132.0,172.7 134.0,231.2 126.0,270.6 123.0,309.7 89.6,309.7 91.2,254.8 93.0,214.7" fill="#1f2c48"/><polygon points="132.1,170.7 166.7,170.7 179.3,210.8 187.2,254.8 188.8,286.3 192.0,309.7 163.6,309.7 154.1,270.6 138.4,223.4 132.1,199.8" fill="#22304f"/><polygon points="138.4,179.3 166.7,185.6 179.3,223.4 186.0,270.6 163.6,278.5 154.1,239.1" fill="#4b6391"/><polygon points="98.0,199.7 119.0,199.7 124.0,244.7 114.0,279.7 94.0,274.7" fill="#3d5078"/><polygon points="123.0,239.7 129.0,239.7 135.0,309.7 126.0,309.7" fill="#5e6470"/><polygon points="99.1,146.7 166.7,152.6 176.0,172.7 138.4,166.7 95.9,172.7" fill="#2a3142"/><polygon points="154.0,156.7 166.0,158.7 172.0,170.7 161.0,168.7" fill="#5a606c"/><polygon points="86.5,210.7 96.0,210.7 96.0,226.7 86.5,226.7" fill="#1e222b"/><polygon points="91.4,98.4 103.3,96.9 106.2,119.1 103.3,144.7 99.0,158.7 91.0,158.7" fill="#bb8576"/><polygon points="92.9,77.7 121.0,71.7 132.9,77.7 140.3,98.4 138.8,117.7 142.0,144.7 99.0,144.7 92.9,98.4" fill="#3e5582"/><polygon points="97.0,80.7 121.0,73.7 132.0,82.7 138.0,116.7 107.0,118.7 98.0,99.7" fill="#8a9fc4"/><polygon points="110.0,89.7 124.0,86.7 128.0,109.7 114.0,112.7" fill="#c4d3ea"/><polygon points="132.9,77.7 147.7,74.7 152.1,91.0 150.7,113.2 183.3,125.1 181.8,132.5 144.7,128.0 134.4,110.3" fill="#dca797"/><polygon points="150.7,95.4 181.8,96.9 156.6,110.3" fill="#c6d5ea"/><polygon points="154.0,114.7 180.0,124.7 179.0,130.7 152.0,124.7" fill="#eaf0f8"/><polygon points="180.3,125.1 192.1,126.6 192.1,135.4 180.3,136.9" fill="#4a7ec0"/><polygon points="190.7,123.6 201.0,116.2 217.3,117.7 209.9,128.0 193.6,135.4" fill="#262a36"/><polygon points="119.6,64.3 138.8,58.4 149.2,64.3 149.2,71.7 132.9,77.7 121.0,77.7" fill="#8e939d"/><polygon points="89.9,58.4 100.3,42.1 115.1,37.7 127.0,42.1 141.8,56.9 164.0,77.7 147.7,68.7 127.0,64.3 110.7,71.7 92.9,71.7" fill="#1e2d52"/><polygon points="127.0,31.7 144.7,33.2 147.7,49.5 140.3,54.0 129.9,43.6" fill="#e6bcaa"/><polygon points="85.5,1.4 113.6,14.0 110.7,24.3 92.9,28.7 88.4,21.4" fill="#dfe4ec"/><polygon points="110.7,19.9 132.9,16.2 150.7,21.4 161.0,52.5 153.6,56.9 147.7,37.7 138.8,30.3 127.0,39.1 113.6,37.7" fill="#e3e7ee"/><polygon points="212.1,46.6 218.8,68.8 214.4,77.7 207.0,68.8" fill="#b3b6be"/><circle cx="212.89999999999998" cy="79.70000000000005" r="3.2" fill="none" stroke="#3d78c4" stroke-width="1.6"/><polygon points="189.2,107.3 207.0,89.5 233.6,82.1 234.0,87.7 209.0,95.7 194.0,112.7" fill="#cdcdcd"/><polygon points="192.0,114.7 214.0,100.7 234.0,94.7 234.0,102.7 214.0,106.7 196.0,120.7" fill="#bdbdbd"/><polygon points="131.0,160.7 140.0,156.7 148.0,160.7 135.0,176.7 111.0,187.7 94.0,199.7 83.0,216.7 88.0,244.7 75.0,238.7 67.0,226.7 66.0,200.7 79.0,183.7 105.0,169.7" fill="#c3c6cc"/><polygon points="66.0,200.7 79.0,183.7 88.0,178.7 76.0,199.7 74.0,224.7 75.0,238.7 67.0,226.7" fill="#a9adb6"/></svg></div></div></div><div class="w" style="left:576.3px;top:693.1px;width:233.3px;height:330.5px;background:#fff;border-radius:13px;box-shadow:0 4px 14px rgba(0,0,0,0.5)"><div style="position:absolute;left:-576.3px;top:-693.1px;width:1920px;height:1080px"><svg style="left:576.3px;top:693.1px" width="233.3" height="40" viewBox="576.3 693.1 233.3 40"><polygon points="605.7,695 809.6,695 809.6,718.6 794.6,718.6 794.6,698.2 605.7,698.2" fill="#3b79d8"/><polygon points="589.8,698.2 794.6,698.2 794.6,721.8 779.3,721.8 779.3,701.4 589.8,701.4" fill="#3b79d8"/><path d="M576.3 701.4 H779.3 V725 C700 726.5 650 730.5 576.3 730.1 Z" fill="#3b79d8"/><path d="M605.7 698 H794.6 V718.6 M589.8 701.2 H779.3 V722" fill="none" stroke="#8fb3ee" stroke-width="0.5"/></svg><div class="ui" style="left:598px;top:708.5px;font-family:'Liberation Serif',serif;font-size:9.6px;font-weight:bold;color:#fff">ENSF 444 - Group 9</div><div class="ui" style="left:604.5px;top:735.5px;font-family:'Liberation Serif',serif;font-size:13.6px;font-weight:bold;color:#1d3c75">Project Proposal</div><div class="ui" style="left:605.5px;top:755.3px;font-family:'Liberation Serif',serif;font-size:6.5px;font-weight:bold;color:#1d3c75">Group Members:</div><div class="ui" style="left:605.5px;top:767.9px;font-family:'Liberation Serif',serif;font-size:5.4px;color:#1d3c75">1</div><div class="ui" style="left:697.9px;top:767.9px;font-family:'Liberation Serif',serif;font-size:5.4px;color:#1d3c75">Aidan Huang</div><div class="ui" style="left:605.5px;top:777.9px;font-family:'Liberation Serif',serif;font-size:5.4px;color:#1d3c75">2</div><div class="ui" style="left:697.9px;top:777.9px;font-family:'Liberation Serif',serif;font-size:5.4px;color:#1d3c75">Jin Kim</div><div class="ui" style="left:605.5px;top:788px;font-family:'Liberation Serif',serif;font-size:5.4px;color:#1d3c75">3</div><div class="ui" style="left:697.9px;top:788px;font-family:'Liberation Serif',serif;font-size:5.4px;color:#1d3c75">Xavier Lachance</div><div class="ui" style="left:604.5px;top:804.6px;font-family:'Liberation Serif',serif;font-size:6.7px;font-weight:bold;color:#1d3c75">Date of Submission</div><div class="ui" style="left:604.5px;top:812.8px;font-family:'Liberation Serif',serif;font-size:6.8px;color:#1d3c75">March 20, 2025</div><div class="a" style="left:604.5px;top:829.2px;width:177px;height:10.8px;background:#c7daf6"></div><div class="ui" style="left:613px;top:828.6px;font-family:'Liberation Serif',serif;font-size:9.3px;font-weight:bold;color:#1d3c75">Introduction (who)</div><div class="a" style="left:613px;top:846.3499999999999px;width:631.2px;white-space:normal;text-align:justify;font-family:'Liberation Serif',serif;font-size:21.7px;line-height:23.72px;color:#173e8c;transform:scale(0.25);transform-origin:0 0">The ENSF-444 Final Project requires us to solve a problem for a client using machine learning techniques. Among the various techniques that we have learned, we must use at least three machine learning models, two of which being non-linear.</div><div class="a" style="left:613px;top:875.8499999999999px;width:631.2px;white-space:normal;text-align:justify;font-family:'Liberation Serif',serif;font-size:21.7px;line-height:23.72px;color:#173e8c;transform:scale(0.25);transform-origin:0 0">As the ESports scene continues to expand, <b>Valorant</b> is finding itself as one of the most popular games in the world. The game has introduced franchising, where gaming organizations have built out their rosters with the top players in the world. Due to the vast amount of players in the scene, it can be difficult for team analysts to identify who to sign to their roster solely based on the 'eye-test' and individual statistics.</div><div class="a" style="left:613px;top:920.9499999999999px;width:631.2px;white-space:normal;text-align:justify;font-family:'Liberation Serif',serif;font-size:21.7px;line-height:23.72px;color:#173e8c;transform:scale(0.25);transform-origin:0 0">Our client, <b>Sentinels</b>, is a professional gaming organization that has found themselves at the heart of Valorant ESports. They are one of the most popular teams in the game, with some of the best players in the world. After a disappointing loss in the 2025 Kickoff tournament, their analyst team is seeking a new and improved method of player <i>forecasting/analysis</i>, as they prepare to enter into the 2025 VCT season.</div></div></div><div class="w" style="left:855px;top:49px;width:1100px;height:978.5px;background:#1f1f1f;border-radius:12px 0 0 12px;box-shadow:0 2px 22px rgba(0,0,0,0.65)"><div style="position:absolute;left:-855px;top:-49px;width:1920px;height:1080px"><div class="a" style="left:855px;top:49px;width:1065px;height:34.3px;background:#050505"></div><div class="a" style="left:865.1px;top:56.8px;width:14px;height:14px;border-radius:50%;background:#fe4f57"></div><div class="a" style="left:888.7px;top:56.8px;width:14px;height:14px;border-radius:50%;background:#f7c81c"></div><div class="a" style="left:912.4px;top:56.8px;width:14px;height:14px;border-radius:50%;background:#17b94c"></div><svg style="left:1272px;top:59px" width="15" height="13" viewBox="0 0 15 13" fill="none" stroke="#b8b8b8" stroke-width="1.2"><path d="M14 6.5H1.5M6.5 1.5l-5 5 5 5"/></svg><svg style="left:1300px;top:59px" width="15" height="13" viewBox="0 0 15 13" fill="none" stroke="#8a8a8a" stroke-width="1.2"><path d="M1 6.5h12.5M8.5 1.5l5 5-5 5"/></svg><div class="a" style="left:1328.7px;top:53.6px;width:576px;height:24.1px;background:#0f0f0f;border:1px solid #2f2f2f;border-radius:6px"></div><svg style="left:1531.5px;top:59px" width="13" height="13" viewBox="0 0 13 13" fill="none" stroke="#a8a8a8" stroke-width="1.1"><circle cx="5.3" cy="5.3" r="4.3"/><path d="M8.5 8.5l3.8 3.8"/></svg><div class="ui" style="left:1550.5px;top:57.5px;font-size:13px;color:#c4c4c4">jinkim-swe-portfolio-2026</div><div class="a" style="left:1913px;top:59px;width:7px;height:13px;border:1.2px solid #aaa;border-radius:2px"></div><div class="a" style="left:855px;top:83.3px;width:49px;height:922.3px;background:#080808"></div><div class="a" style="left:855px;top:83.3px;width:2px;height:50px;background:#9a9a9a"></div><svg style="left:866.4px;top:95.2px" width="26" height="26" viewBox="0 0 24 24" fill="none" stroke="#a9a9a9" stroke-width="1.3" stroke-linecap="round" stroke-linejoin="round"><circle cx="6" cy="4.5" r="2.5"/><circle cx="6" cy="19.5" r="2.5"/><circle cx="18" cy="8" r="2.5"/><path d="M6 7v10M18 10.5c0 4-5 4.5-10.5 7.5"/></svg><svg style="left:866.4px;top:144.8px" width="26" height="26" viewBox="0 0 24 24" fill="none" stroke="#5c5c5c" stroke-width="1.3" stroke-linecap="round" stroke-linejoin="round"><path d="M9 6.5V3h7.5l4 4v11.5H15"/><path d="M16.5 3v4h4"/><rect x="3.5" y="7" width="11.5" height="14" rx="1"/></svg><svg style="left:866.4px;top:194.8px" width="26" height="26" viewBox="0 0 24 24" fill="none" stroke="#5c5c5c" stroke-width="1.3" stroke-linecap="round" stroke-linejoin="round"><path d="M14 21H5V3h9l4 4v4"/><path d="M14 3v4h4"/><path d="M8 11.5a3 3 0 0 1 4.5-1.5M8 14l2-2.5 2 2"/><circle cx="17" cy="17.5" r="2.3"/><path d="M17 13v1.5M17 20.5V22M12.5 17.5H14M20 17.5h1.5M13.8 14.3l1 1M19.2 19.7l1 1M13.8 20.7l1-1M19.2 15.3l1-1"/></svg><svg style="left:866.4px;top:243.7px" width="26" height="26" viewBox="0 0 24 24" fill="none" stroke="#5c5c5c" stroke-width="1.3" stroke-linecap="round" stroke-linejoin="round"><circle cx="12" cy="12" r="10"/><path d="M9.6 20.5v-3c0-.9.3-1.5.7-1.9-2.6-.3-4.6-1.4-4.6-4.7 0-1 .4-1.9 1-2.6-.1-.5-.3-1.6.2-2.7.9 0 2 .6 2.7 1.1a8.6 8.6 0 0 1 4.8 0c.7-.5 1.8-1.1 2.7-1.1.5 1.1.3 2.2.2 2.7.6.7 1 1.6 1 2.6 0 3.3-2 4.4-4.6 4.7.4.4.7 1 .7 1.9v3z" fill="#5c5c5c" stroke="none"/></svg><svg style="left:866.4px;top:294.0px" width="26" height="26" viewBox="0 0 24 24" fill="none" stroke="#5c5c5c" stroke-width="1.3" stroke-linecap="round" stroke-linejoin="round"><path d="M11 17H3V4h17v6"/><path d="M7 20h5"/><circle cx="17.5" cy="17.5" r="4.5"/><path d="M15.8 16l1.2 1.2-1.2 1.2M18.5 18.5h1.5"/></svg><svg style="left:866.4px;top:344.0px" width="26" height="26" viewBox="0 0 24 24" fill="none" stroke="#5c5c5c" stroke-width="1.3" stroke-linecap="round" stroke-linejoin="round"><rect x="3" y="8" width="7" height="7"/><rect x="3" y="15" width="7" height="7"/><rect x="10" y="15" width="7" height="7"/><path d="M16.5 2.5l4.5 4.5-4.5 4.5-4.5-4.5z"/></svg><svg style="left:866.4px;top:393.0px" width="26" height="26" viewBox="0 0 24 24" fill="none" stroke="#5c5c5c" stroke-width="1.4" stroke-linecap="round" stroke-linejoin="round"><circle cx="10" cy="10" r="7"/><path d="M15 15l6.5 6.5"/></svg><svg style="left:866.4px;top:442.5px" width="26" height="26" viewBox="0 0 24 24" fill="none" stroke="#5c5c5c" stroke-width="1.3" stroke-linecap="round" stroke-linejoin="round"><path d="M9 3l12 8-12 8"/><circle cx="7" cy="17" r="3"/><path d="M3 15h8M3 19h8M5 13.5l1 1M9 13.5l-1 1"/></svg><svg style="left:866.4px;top:492.0px" width="26" height="26" viewBox="0 0 24 24" fill="none" stroke="#5c5c5c" stroke-width="1.3" stroke-linecap="round" stroke-linejoin="round"><path d="M9 3h6M10 3v6l-6 11h16L14 9V3M6.5 15h11"/></svg><svg style="left:866.4px;top:542.0px" width="26" height="26" viewBox="0 0 24 24" fill="#5c5c5c" stroke="none" stroke-width="0" stroke-linecap="round" stroke-linejoin="round"><path d="M11.9 2c-5 0-4.7 2.2-4.7 2.2v2.3h4.8v.7H5.3S2 6.8 2 11.9s2.8 4.9 2.8 4.9h1.7v-2.4s-.1-2.8 2.8-2.8h4.8s2.7 0 2.7-2.6V4.7S17.2 2 11.9 2zM9.3 3.5a.9.9 0 1 1 0 1.8.9.9 0 0 1 0-1.8z"/><path d="M12.1 22c5 0 4.7-2.2 4.7-2.2v-2.3H12v-.7h6.7s3.3.4 3.3-4.7-2.8-4.9-2.8-4.9h-1.7v2.4s.1 2.8-2.8 2.8H9.9s-2.7 0-2.7 2.6v4.3S6.8 22 12.1 22zm2.6-1.5a.9.9 0 1 1 0-1.8.9.9 0 0 1 0 1.8z"/></svg><svg style="left:866.4px;top:592.0px" width="26" height="26" viewBox="0 0 24 24" fill="none" stroke="#5c5c5c" stroke-width="1.3" stroke-linecap="round" stroke-linejoin="round"><ellipse cx="12" cy="5" rx="7" ry="2.5"/><path d="M5 5v14c0 1.4 3 2.5 7 2.5s7-1.1 7-2.5V5"/></svg><svg style="left:866.4px;top:641.7px" width="26" height="26" viewBox="0 0 24 24" fill="none" stroke="#5c5c5c" stroke-width="1.3" stroke-linecap="round" stroke-linejoin="round"><circle cx="12" cy="12" r="10"/><circle cx="9.5" cy="7" r="1.2"/><circle cx="9.5" cy="17" r="1.2"/><circle cx="15" cy="12" r="1.2"/><path d="M9.5 8.2v7.6M9.5 8.5l5 3"/></svg><svg style="left:866.4px;top:692.0px" width="26" height="26" viewBox="0 0 24 24" fill="none" stroke="#5c5c5c" stroke-width="1.3" stroke-linecap="round" stroke-linejoin="round"><path d="M13 21.5a10 10 0 1 1 8.5-9.5"/><circle cx="9" cy="7" r="1.2"/><path d="M9 8.5v9M9 8.5l5 4"/><circle cx="17" cy="17" r="3.2"/><circle cx="17" cy="17" r="1.2"/><path d="M20.5 20.5l1.5 1.5"/></svg><svg style="left:866.4px;top:741.0px" width="26" height="26" viewBox="0 0 24 24" fill="none" stroke="#5c5c5c" stroke-width="1.3" stroke-linecap="round" stroke-linejoin="round"><path d="M3 15c0-5 4-8 9-8h3V3.5l6 5.5-6 5.5V11h-3c-4 0-7 1.5-9 4z"/><circle cx="8" cy="19" r="2.5"/></svg><div class="ui" style="left:869px;top:793px;font-size:13px;color:#5c5c5c;letter-spacing:1.5px">···</div><svg style="left:866.4px;top:918.0px" width="26" height="26" viewBox="0 0 24 24" fill="none" stroke="#5c5c5c" stroke-width="1.3" stroke-linecap="round" stroke-linejoin="round"><circle cx="12" cy="12" r="10"/><circle cx="12" cy="10" r="3.5"/><path d="M5.5 19c1.5-3 3.8-4.5 6.5-4.5s5 1.5 6.5 4.5"/></svg><svg style="left:866.4px;top:967.5px" width="26" height="26" viewBox="0 0 24 24" fill="none" stroke="#5c5c5c" stroke-width="1.3" stroke-linecap="round" stroke-linejoin="round"><circle cx="12" cy="12" r="3"/><path d="M12 2.5l1.5 2.6 2.9-.9.7 2.9 2.9.7-.9 2.9 2.6 1.5-2.6 1.5.9 2.9-2.9.7-.7 2.9-2.9-.9L12 21.5l-1.5-2.6-2.9.9-.7-2.9-2.9-.7.9-2.9L2.5 12l2.6-1.5-.9-2.9 2.9-.7.7-2.9 2.9.9z"/></svg><div class="a" style="left:904px;top:83.3px;width:175.5px;height:922.3px;background:#0e0e0e;border-right:1px solid #262626"></div><div class="ui" style="left:925px;top:95px;font-size:11.1px;color:#d49a80;letter-spacing:0.1px">SOURCE CONTROL</div><div class="ui" style="left:1047px;top:93px;font-size:13px;color:#d0d0d0;letter-spacing:1px">···</div><div class="a" style="left:904px;top:120px;width:175px;height:22px;background:#232323"></div><svg style="left:909.6px;top:128px" width="10" height="6" viewBox="0 0 10 6" fill="none" stroke="#b5b5b5" stroke-width="1.1"><path d="M1 1l4 4 4-4"/></svg><div class="ui" style="left:925px;top:125px;font-size:11.2px;font-weight:bold;color:#b3b3b3">REPOSITORIES</div><div class="a" style="left:904px;top:142px;width:175px;height:23px;background:#383838"></div><svg style="left:938.5px;top:145.4px" width="17" height="17" viewBox="0 0 24 24" fill="none" stroke="#c2c2c2" stroke-width="1.5" stroke-linecap="round" stroke-linejoin="round"><circle cx="5" cy="4" r="2.2"/><circle cx="5" cy="20" r="2.2"/><circle cx="16" cy="8" r="2.2"/><path d="M5 6.2v11.6M16 10.2c0 4-5 4-10 8"/></svg><div class="ui" style="left:954.5px;top:147.5px;font-size:10px;font-weight:bold;color:#c2c2c2">п</div><svg style="left:966.0px;top:145.9px" width="16" height="16" viewBox="0 0 24 24" fill="none" stroke="#c2c2c2" stroke-width="1.5" stroke-linecap="round" stroke-linejoin="round"><path d="M4 10a8 8 0 0 1 14-3.5M20 14a8 8 0 0 1-14 3.5"/><path d="M18 3v4h-4M6 21v-4h4"/></svg><svg style="left:990.5px;top:144.9px" width="18" height="18" viewBox="0 0 24 24" fill="none" stroke="#c2c2c2" stroke-width="1.4" stroke-linecap="round" stroke-linejoin="round"><path d="M9 2c.7 3.5 2 5 5.5 5.5-3.5.7-4.8 2-5.5 5.5-.7-3.5-2-4.8-5.5-5.5C7 7 8.3 5.5 9 2z"/><path d="M17.5 13c.4 1.8 1.1 2.5 2.8 2.8-1.7.4-2.4 1.1-2.8 2.8-.4-1.7-1.1-2.4-2.8-2.8 1.7-.3 2.4-1 2.8-2.8z"/></svg><svg style="left:1016.0px;top:144.9px" width="18" height="18" viewBox="0 0 24 24" fill="none" stroke="#c2c2c2" stroke-width="1.4" stroke-linecap="round" stroke-linejoin="round"><path d="M2 6h6l-3-3M2 6l3 3"/><path d="M2.5 6H9a6 6 0 0 1 4 10L5 21"/><path d="M18 14v8M14 18h8"/></svg><svg style="left:1039.0px;top:144.9px" width="18" height="18" viewBox="0 0 24 24" fill="none" stroke="#c2c2c2" stroke-width="1.4" stroke-linecap="round" stroke-linejoin="round"><circle cx="6" cy="5" r="2.5"/><circle cx="6" cy="19" r="2.5"/><circle cx="18" cy="12" r="2.5"/><path d="M6 7.5v9M11 2v20M18 14.5c0 3-3 5-7 5"/></svg><div class="a" style="left:904px;top:165px;width:175px;height:23px;background:#232323"></div><svg style="left:909.6px;top:173.5px" width="10" height="6" viewBox="0 0 10 6" fill="none" stroke="#b5b5b5" stroke-width="1.1"><path d="M1 1l4 4 4-4"/></svg><div class="ui" style="left:925px;top:170px;font-size:11.2px;font-weight:bold;color:#b3b3b3">CHANGES</div><div class="a" style="left:924.3px;top:192px;width:142.4px;height:26.5px;background:#0a0a0a;border-radius:3px"></div><div class="ui" style="left:931px;top:197.5px;font-size:13px;color:#7c7c7c">Message (⌘...</div><svg style="left:1042px;top:197.5px" width="16" height="16" viewBox="0 0 16 16" fill="none" stroke="#9a9a9a" stroke-width="1"><path d="M6 1.5c.5 2.5 1.5 3.5 4 4-2.5.5-3.5 1.5-4 4-.5-2.5-1.5-3.5-4-4 2.5-.5 3.5-1.5 4-4z"/><path d="M12 9.5c.3 1.2.8 1.7 2 2-1.2.3-1.7.8-2 2-.3-1.2-.8-1.7-2-2 1.2-.3 1.7-.8 2-2z"/></svg><div class="a" style="left:924.3px;top:227.2px;width:142.4px;height:28.8px;background:#172c48;border-radius:2px"></div><svg style="left:952px;top:236px" width="12" height="11" viewBox="0 0 12 11" fill="none" stroke="#9aa3ad" stroke-width="1.1"><path d="M1 6l3.5 4L11 1"/></svg><div class="ui" style="left:969.4px;top:234px;font-size:13.5px;color:#a3a8ae">Commit</div><div class="a" style="left:1040px;top:231px;width:1px;height:21px;background:#3a4d66"></div><svg style="left:1047.8px;top:238.5px" width="10" height="6" viewBox="0 0 10 6" fill="none" stroke="#9aa3ad" stroke-width="1.1"><path d="M1 1l4 4 4-4"/></svg><div class="a" style="left:904px;top:484.2px;width:175px;height:22.8px;background:#222222"></div><svg style="left:910px;top:491.5px" width="10" height="7" viewBox="0 0 10 6" fill="none" stroke="#b5b5b5" stroke-width="1.1"><path d="M1 1l4 4 4-4"/></svg><div class="ui" style="left:925px;top:489px;font-size:12px;font-weight:bold;color:#9a9a9a">G...</div><svg style="left:950.0px;top:487.6px" width="16" height="16" viewBox="0 0 24 24" fill="none" stroke="#c8c8c8" stroke-width="1.6" stroke-linecap="round" stroke-linejoin="round"><circle cx="5" cy="4" r="2.2"/><circle cx="5" cy="20" r="2.2"/><circle cx="16" cy="8" r="2.2"/><path d="M5 6.2v11.6M16 10.2c0 4-5 4-10 8"/></svg><div class="ui" style="left:967.3px;top:488.5px;font-size:12.5px;color:#d0d0d0">Auto</div><svg style="left:1000.4px;top:487.6px" width="16" height="16" viewBox="0 0 24 24" fill="none" stroke="#c8c8c8" stroke-width="1.6" stroke-linecap="round" stroke-linejoin="round"><circle cx="12" cy="12" r="10"/><circle cx="12" cy="12" r="6"/><circle cx="12" cy="12" r="2.5"/></svg><svg style="left:1025.8px;top:487.6px" width="16" height="16" viewBox="0 0 24 24" fill="none" stroke="#c8c8c8" stroke-width="1.5" stroke-linecap="round" stroke-linejoin="round"><path d="M12 1v2M12 5v2M12 9v2M7 8l5 4 5-4"/><circle cx="12" cy="18" r="3"/><path d="M2 18h7M15 18h7"/></svg><svg style="left:1050.8px;top:487.6px" width="16" height="16" viewBox="0 0 24 24" fill="none" stroke="#c8c8c8" stroke-width="1.5" stroke-linecap="round" stroke-linejoin="round"><path d="M12 1v11M7 8l5 4 5-4"/><circle cx="12" cy="18" r="3"/><path d="M2 18h7M15 18h7"/></svg><div class="a" style="left:1076.5px;top:495px;width:2px;height:2px;background:#aaa"></div><div class="a" style="left:914.8px;top:525px;width:1.6px;height:86px;background:#3b8eea"></div><div class="a" style="left:909.6px;top:512.2px;width:12px;height:12px;border-radius:50%;border:2px solid #3b8eea;background:#0e0e0e"></div><div class="a" style="left:911.1px;top:536.6px;width:9px;height:9px;border-radius:50%;background:#3794ff"></div><div class="a" style="left:911.1px;top:559.5px;width:9px;height:9px;border-radius:50%;background:#3794ff"></div><div class="a" style="left:911.1px;top:582.5px;width:9px;height:9px;border-radius:50%;background:#3794ff"></div><div class="a" style="left:911.1px;top:605.4px;width:9px;height:9px;border-radius:50%;background:#3794ff"></div><div class="ui" style="left:927px;top:510.20000000000005px;font-size:13.2px;letter-spacing:0.45px;color:#bdbdbd">latest u...</div><div class="ui" style="left:927px;top:533.1px;font-size:13.2px;letter-spacing:0.45px;color:#bdbdbd">got contact workin...</div><div class="ui" style="left:927px;top:556px;font-size:13.2px;letter-spacing:0.45px;color:#bdbdbd">done experience se...</div><div class="ui" style="left:927px;top:579px;font-size:13.2px;letter-spacing:0.45px;color:#bdbdbd">project initialized<span style="color:#7d7d7d;font-size:12.5px;margin-left:6px">Ji...</span></div><div class="ui" style="left:927px;top:601.9px;font-size:13.2px;letter-spacing:0.45px;color:#bdbdbd">Initial commit<span style="color:#7d7d7d;font-size:12.5px;margin-left:6px">jin kim</span></div><div class="a" style="left:993px;top:509px;width:50.8px;height:18px;border-radius:9px;background:#3c96f2"></div><svg style="left:996.5px;top:511.5px" width="13" height="13" viewBox="0 0 24 24" fill="none" stroke="#fff" stroke-width="2"><circle cx="12" cy="12" r="10"/><circle cx="12" cy="11" r="4"/><path d="M12 15v7"/></svg><div class="ui" style="left:1011.5px;top:510.5px;font-size:13px;color:#fff">main</div><div class="a" style="left:1048.2px;top:509px;width:18.3px;height:18.3px;border-radius:50%;background:#b57ad6"></div><svg style="left:1050.5px;top:512px" width="14" height="12" viewBox="0 0 24 20" fill="none" stroke="#fff" stroke-width="2"><path d="M6 17a4 4 0 0 1-.5-8 6 6 0 0 1 11.5-1 4.5 4.5 0 0 1 1 9z"/></svg><div class="a" style="left:904px;top:982.5px;width:175px;height:23px;background:#222222"></div><svg style="left:911px;top:988.5px" width="8" height="11" viewBox="0 0 8 11" fill="none" stroke="#b0b0b0" stroke-width="1.1"><path d="M2 1.5l4 4-4 4"/></svg><div class="ui" style="left:925px;top:987.5px;font-size:11.2px;font-weight:bold;color:#a8a8a8">GITLENS</div><div class="a" style="left:1079.5px;top:83.3px;width:841px;height:36.7px;background:#0e0e0e"></div><div class="a" style="left:1551.5px;top:83.3px;width:182.2px;height:37px;background:#1f1f1f"></div><div class="a" style="left:1079.5px;top:119.5px;width:472px;height:1px;background:#262626"></div><div class="a" style="left:1733.7px;top:119.5px;width:200px;height:1px;background:#262626"></div><div class="a" style="left:1254.9px;top:83.3px;width:1px;height:36.7px;background:#262626"></div><div class="a" style="left:1421.0px;top:83.3px;width:1px;height:36.7px;background:#262626"></div><div class="a" style="left:1551.0px;top:83.3px;width:1px;height:36.7px;background:#262626"></div><div class="a" style="left:1733.2px;top:83.3px;width:1px;height:36.7px;background:#262626"></div><div class="a" style="left:1881.0px;top:83.3px;width:1px;height:36.7px;background:#262626"></div><svg style="left:1090px;top:94px" width="16" height="16" viewBox="0 0 24 24" fill="none" stroke="#3f7fd9" stroke-width="1.4"><ellipse cx="12" cy="12" rx="10.5" ry="4"/><ellipse cx="12" cy="12" rx="10.5" ry="4" transform="rotate(60 12 12)"/><ellipse cx="12" cy="12" rx="10.5" ry="4" transform="rotate(120 12 12)"/><circle cx="12" cy="12" r="1.8" fill="#3f7fd9"/></svg><div class="ui" style="left:1113px;top:94.5px;font-size:13.8px;color:#d3b43c">project-card.tsx<span style="margin-left:7px;font-size:13px">3</span></div><svg style="left:1266px;top:94px" width="16" height="16" viewBox="0 0 24 24" fill="none" stroke="#3f7fd9" stroke-width="1.4"><ellipse cx="12" cy="12" rx="10.5" ry="4"/><ellipse cx="12" cy="12" rx="10.5" ry="4" transform="rotate(60 12 12)"/><ellipse cx="12" cy="12" rx="10.5" ry="4" transform="rotate(120 12 12)"/><circle cx="12" cy="12" r="1.8" fill="#3f7fd9"/></svg><div class="ui" style="left:1289.2px;top:94.5px;font-size:13.8px;color:#a6a6a6">RightColumn.tsx</div><svg style="left:1432.5px;top:94px" width="16" height="16" viewBox="0 0 24 24" fill="none" stroke="#3f7fd9" stroke-width="1.4"><ellipse cx="12" cy="12" rx="10.5" ry="4"/><ellipse cx="12" cy="12" rx="10.5" ry="4" transform="rotate(60 12 12)"/><ellipse cx="12" cy="12" rx="10.5" ry="4" transform="rotate(120 12 12)"/><circle cx="12" cy="12" r="1.8" fill="#3f7fd9"/></svg><div class="ui" style="left:1455.3px;top:94.5px;font-size:13.8px;color:#d3b43c">page.tsx<span style="margin-left:7px;font-size:13px">3</span></div><svg style="left:1562.4px;top:94.0px" width="16" height="16" viewBox="0 0 24 24"><path fill="#3d7ab8" d="M11.9 1.5c-5 0-4.7 2.2-4.7 2.2v2.3h4.8v.7H5.3S2 6.3 2 11.4s2.8 4.9 2.8 4.9h1.7v-2.4s-.1-2.8 2.8-2.8h4.8s2.7 0 2.7-2.6V4.2S17.2 1.5 11.9 1.5z"/><path fill="#f5cc3a" d="M12.1 22.5c5 0 4.7-2.2 4.7-2.2V18H12v-.7h6.7s3.3.4 3.3-4.7-2.8-4.9-2.8-4.9h-1.7v2.4s.1 2.8-2.8 2.8H9.9s-2.7 0-2.7 2.6v4.3S6.8 22.5 12.1 22.5z"/><circle cx="9.4" cy="4" r="0.9" fill="#fff"/><circle cx="14.6" cy="20" r="0.9" fill="#fff"/></svg><div class="ui" style="left:1584.9px;top:94.5px;font-size:13.8px;color:#ececec">ValPlayerRanker.py</div><svg style="left:1712.5px;top:96.5px" width="11" height="11" viewBox="0 0 11 11" fill="none" stroke="#e0e0e0" stroke-width="1.2"><path d="M1 1l9 9M10 1l-9 9"/></svg><svg style="left:1744.6px;top:94px" width="16" height="16" viewBox="0 0 24 24" fill="none" stroke="#3f7fd9" stroke-width="1.4"><ellipse cx="12" cy="12" rx="10.5" ry="4"/><ellipse cx="12" cy="12" rx="10.5" ry="4" transform="rotate(60 12 12)"/><ellipse cx="12" cy="12" rx="10.5" ry="4" transform="rotate(120 12 12)"/><circle cx="12" cy="12" r="1.8" fill="#3f7fd9"/></svg><div class="ui" style="left:1767px;top:94.5px;font-size:13.8px;color:#d3b43c">textarea.tsx<span style="margin-left:7px;font-size:13px">1</span></div><svg style="left:1892px;top:94px" width="16" height="16" viewBox="0 0 24 24" fill="none" stroke="#3f7fd9" stroke-width="1.4"><ellipse cx="12" cy="12" rx="10.5" ry="4"/><ellipse cx="12" cy="12" rx="10.5" ry="4" transform="rotate(60 12 12)"/><ellipse cx="12" cy="12" rx="10.5" ry="4" transform="rotate(120 12 12)"/><circle cx="12" cy="12" r="1.8" fill="#3f7fd9"/></svg><div class="ui" style="left:1913px;top:94.5px;font-size:13.8px;color:#a6a6a6">i</div><div class="a" style="left:1079.5px;top:120px;width:841px;height:22px;background:#1f1f1f"></div><div class="ui" style="left:1096.6px;top:124px;font-size:13.8px;color:#a9a9a9">Users</div><div class="ui" style="left:1149px;top:124px;font-size:13.8px;color:#a9a9a9">jinkim</div><div class="ui" style="left:1202.5px;top:124px;font-size:13.8px;color:#a9a9a9">Documents</div><div class="ui" style="left:1290.8px;top:124px;font-size:13.8px;color:#a9a9a9">school</div><div class="ui" style="left:1347.7px;top:124px;font-size:13.8px;color:#a9a9a9">third_year</div><div class="ui" style="left:1428.6px;top:124px;font-size:13.8px;color:#a9a9a9">second sem</div><div class="ui" style="left:1521px;top:124px;font-size:13.8px;color:#a9a9a9">ENSF444</div><div class="ui" style="left:1597px;top:124px;font-size:13.8px;color:#a9a9a9">ENSF444_Final_Project_Group_9</div><div class="ui" style="left:1845.5px;top:124px;font-size:13.8px;color:#a9a9a9">ValPlayerRanker.py</div><svg style="left:1140px;top:125.8px" width="6" height="10" viewBox="0 0 6 10" fill="none" stroke="#a0a0a0" stroke-width="1"><path d="M1 1l4 4-4 4"/></svg><svg style="left:1193.6px;top:125.8px" width="6" height="10" viewBox="0 0 6 10" fill="none" stroke="#a0a0a0" stroke-width="1"><path d="M1 1l4 4-4 4"/></svg><svg style="left:1281px;top:125.8px" width="6" height="10" viewBox="0 0 6 10" fill="none" stroke="#a0a0a0" stroke-width="1"><path d="M1 1l4 4-4 4"/></svg><svg style="left:1338px;top:125.8px" width="6" height="10" viewBox="0 0 6 10" fill="none" stroke="#a0a0a0" stroke-width="1"><path d="M1 1l4 4-4 4"/></svg><svg style="left:1419px;top:125.8px" width="6" height="10" viewBox="0 0 6 10" fill="none" stroke="#a0a0a0" stroke-width="1"><path d="M1 1l4 4-4 4"/></svg><svg style="left:1511px;top:125.8px" width="6" height="10" viewBox="0 0 6 10" fill="none" stroke="#a0a0a0" stroke-width="1"><path d="M1 1l4 4-4 4"/></svg><svg style="left:1587px;top:125.8px" width="6" height="10" viewBox="0 0 6 10" fill="none" stroke="#a0a0a0" stroke-width="1"><path d="M1 1l4 4-4 4"/></svg><svg style="left:1814px;top:125.8px" width="6" height="10" viewBox="0 0 6 10" fill="none" stroke="#a0a0a0" stroke-width="1"><path d="M1 1l4 4-4 4"/></svg><svg style="left:1824.0px;top:124.5px" width="15" height="15" viewBox="0 0 24 24"><path fill="#3d7ab8" d="M11.9 1.5c-5 0-4.7 2.2-4.7 2.2v2.3h4.8v.7H5.3S2 6.3 2 11.4s2.8 4.9 2.8 4.9h1.7v-2.4s-.1-2.8 2.8-2.8h4.8s2.7 0 2.7-2.6V4.2S17.2 1.5 11.9 1.5z"/><path fill="#f5cc3a" d="M12.1 22.5c5 0 4.7-2.2 4.7-2.2V18H12v-.7h6.7s3.3.4 3.3-4.7-2.8-4.9-2.8-4.9h-1.7v2.4s.1 2.8-2.8 2.8H9.9s-2.7 0-2.7 2.6v4.3S6.8 22.5 12.1 22.5z"/><circle cx="9.4" cy="4" r="0.9" fill="#fff"/><circle cx="14.6" cy="20" r="0.9" fill="#fff"/></svg><div class="a" style="left:1148.2px;top:161px;width:1px;height:594px;background:#3a3a3a"></div><div class="a" style="left:1178px;top:171.4px;width:1px;height:56px;background:#3a3a3a"></div><div class="ln" style="left:1081.8px;top:154.07px">197</div><div class="code" style="left:1148.5px;top:154.07px">    rf_params <span style="color:#d46a7e;">=</span> <span style="color:#ffd700;">{</span></div><div class="ln" style="left:1081.8px;top:172.7px">198</div><div class="code" style="left:1148.5px;top:172.7px">        <span style="color:#ce9178;">&#x27;regressor__n_estimators&#x27;</span>: <span style="color:#da70d6;">[</span>50, 100<span style="color:#da70d6;">]</span>,</div><div class="ln" style="left:1081.8px;top:191.32999999999998px">199</div><div class="code" style="left:1148.5px;top:191.32999999999998px">        <span style="color:#ce9178;">&#x27;regressor__max_depth&#x27;</span>: <span style="color:#da70d6;">[</span>5, 10, <span style="color:#569cd6;">None</span><span style="color:#da70d6;">]</span>,</div><div class="ln" style="left:1081.8px;top:209.95999999999998px">200</div><div class="code" style="left:1148.5px;top:209.95999999999998px">        <span style="color:#ce9178;">&#x27;regressor__min_samples_split&#x27;</span>: <span style="color:#da70d6;">[</span>2, 5<span style="color:#da70d6;">]</span></div><div class="ln" style="left:1081.8px;top:228.58999999999997px">201</div><div class="code" style="left:1148.5px;top:228.58999999999997px">    <span style="color:#ffd700;">}</span></div><div class="ln" style="left:1081.8px;top:247.21999999999997px">202</div><div class="code" style="left:1148.5px;top:247.21999999999997px"></div><div class="ln" style="left:1081.8px;top:265.84999999999997px">203</div><div class="code" style="left:1148.5px;top:265.84999999999997px">    <span style="color:#6a6a6a;"># Predict Impact Score</span></div><div class="ln" style="left:1081.8px;top:284.47999999999996px">204</div><div class="code" style="left:1148.5px;top:284.47999999999996px"></div><div class="ln" style="left:1081.8px;top:303.10999999999996px">205</div><div class="code" style="left:1148.5px;top:303.10999999999996px">    rf_grid <span style="color:#d46a7e;">=</span> <span style="color:#5aa6e8;">GridSearchCV</span><span style="color:#ffd700;">(</span>rf_pipeline, rf_params, <span style="color:#9cdcfe;font-style:italic;">cv</span><span style="color:#d46a7e;">=</span>5, <span style="color:#9cdcfe;font-style:italic;">scoring</span><span style="color:#d46a7e;">=</span><span style="color:#ce9178;">&#x27;r2&#x27;</span>, <span style="color:#9cdcfe;font-style:italic;">n_jobs</span><span style="color:#d46a7e;">=</span><span style="color:#d46a7e;">-</span>1<span style="color:#ffd700;">)</span></div><div class="ln" style="left:1081.8px;top:321.73999999999995px">206</div><div class="code" style="left:1148.5px;top:321.73999999999995px">    rf_grid.<span style="color:#5aa6e8;">fit</span><span style="color:#ffd700;">(</span>X_train2, z_train<span style="color:#ffd700;">)</span></div><div class="ln" style="left:1081.8px;top:340.36999999999995px">207</div><div class="code" style="left:1148.5px;top:340.36999999999995px"></div><div class="ln" style="left:1081.8px;top:358.99999999999994px">208</div><div class="code" style="left:1148.5px;top:358.99999999999994px">    rf_best <span style="color:#d46a7e;">=</span> rf_grid.best_estimator_</div><div class="ln" style="left:1081.8px;top:377.62999999999994px">209</div><div class="code" style="left:1148.5px;top:377.62999999999994px">    rf_preds <span style="color:#d46a7e;">=</span> rf_best.<span style="color:#5aa6e8;">predict</span><span style="color:#ffd700;">(</span>X_test2<span style="color:#ffd700;">)</span></div><div class="ln" style="left:1081.8px;top:396.26px">210</div><div class="code" style="left:1148.5px;top:396.26px"></div><div class="ln" style="left:1081.8px;top:414.89px">211</div><div class="code" style="left:1148.5px;top:414.89px">    agents_df<span style="color:#ffd700;">[</span><span style="color:#ce9178;">&#x27;Predicted Impact Score&#x27;</span><span style="color:#ffd700;">]</span> <span style="color:#d46a7e;">=</span> rf_best.<span style="color:#5aa6e8;">predict</span><span style="color:#ffd700;">(</span>X<span style="color:#ffd700;">)</span></div><div class="ln" style="left:1081.8px;top:433.52px">212</div><div class="code" style="left:1148.5px;top:433.52px"></div><div class="ln" style="left:1081.8px;top:452.15px">213</div><div class="code" style="left:1148.5px;top:452.15px">    best_params_impact <span style="color:#d46a7e;">=</span> rf_grid.best_params_</div><div class="ln" style="left:1081.8px;top:470.78px">214</div><div class="code" style="left:1148.5px;top:470.78px">    mse_impact <span style="color:#d46a7e;">=</span> <span style="color:#5aa6e8;">mean_squared_error</span><span style="color:#ffd700;">(</span>z_test, rf_preds<span style="color:#ffd700;">)</span></div><div class="ln" style="left:1081.8px;top:489.40999999999997px">215</div><div class="code" style="left:1148.5px;top:489.40999999999997px">    r2_impact <span style="color:#d46a7e;">=</span> <span style="color:#5aa6e8;">r2_score</span><span style="color:#ffd700;">(</span>z_test, rf_preds<span style="color:#ffd700;">)</span></div><div class="ln" style="left:1081.8px;top:508.0399999999999px">216</div><div class="code" style="left:1148.5px;top:508.0399999999999px"></div><div class="ln" style="left:1081.8px;top:526.6700000000001px">217</div><div class="code" style="left:1148.5px;top:526.6700000000001px">    <span style="color:#6a6a6a;"># Predict Rating Score</span></div><div class="ln" style="left:1081.8px;top:545.3px">218</div><div class="code" style="left:1148.5px;top:545.3px"></div><div class="ln" style="left:1081.8px;top:563.9300000000001px">219</div><div class="code" style="left:1148.5px;top:563.9300000000001px">    rf_grid.<span style="color:#5aa6e8;">fit</span><span style="color:#ffd700;">(</span>X_train, y_train<span style="color:#ffd700;">)</span></div><div class="ln" style="left:1081.8px;top:582.56px">220</div><div class="code" style="left:1148.5px;top:582.56px"></div><div class="ln" style="left:1081.8px;top:601.19px">221</div><div class="code" style="left:1148.5px;top:601.19px">    rf_best <span style="color:#d46a7e;">=</span> rf_grid.best_estimator_</div><div class="ln" style="left:1081.8px;top:619.82px">222</div><div class="code" style="left:1148.5px;top:619.82px">    rf_preds <span style="color:#d46a7e;">=</span> rf_best.<span style="color:#5aa6e8;">predict</span><span style="color:#ffd700;">(</span>X_test<span style="color:#ffd700;">)</span></div><div class="ln" style="left:1081.8px;top:638.45px">223</div><div class="code" style="left:1148.5px;top:638.45px"></div><div class="ln" style="left:1081.8px;top:657.08px">224</div><div class="code" style="left:1148.5px;top:657.08px">    agents_df<span style="color:#ffd700;">[</span><span style="color:#ce9178;">&#x27;Predicted Rating&#x27;</span><span style="color:#ffd700;">]</span> <span style="color:#d46a7e;">=</span> rf_best.<span style="color:#5aa6e8;">predict</span><span style="color:#ffd700;">(</span>X<span style="color:#ffd700;">)</span></div><div class="ln" style="left:1081.8px;top:675.71px">225</div><div class="code" style="left:1148.5px;top:675.71px"></div><div class="ln" style="left:1081.8px;top:694.34px">226</div><div class="code" style="left:1148.5px;top:694.34px">    best_params_rating <span style="color:#d46a7e;">=</span> rf_grid.best_params_</div><div class="ln" style="left:1081.8px;top:712.97px">227</div><div class="code" style="left:1148.5px;top:712.97px">    mse_rating <span style="color:#d46a7e;">=</span> <span style="color:#5aa6e8;">mean_squared_error</span><span style="color:#ffd700;">(</span>y_test, rf_preds<span style="color:#ffd700;">)</span></div><div class="ln" style="left:1081.8px;top:731.6px">228</div><div class="code" style="left:1148.5px;top:731.6px">    r2_rating <span style="color:#d46a7e;">=</span> <span style="color:#5aa6e8;">r2_score</span><span style="color:#ffd700;">(</span>y_test, rf_preds<span style="color:#ffd700;">)</span></div><div class="ln" style="left:1081.8px;top:750.23px">229</div><div class="code" style="left:1148.5px;top:750.23px"></div><div class="a" style="left:1079.5px;top:142px;width:841px;height:19px;background:#1f1f1f;box-shadow:0 2px 3px rgba(0,0,0,0.6)"></div><div class="ln" style="left:1081.8px;top:143.29999999999998px">156</div><div class="code" style="left:1148.5px;top:143.29999999999998px"><span style="color:#c586c0;">def</span> <span style="color:#5aa6e8;">predict_agents</span><span style="color:#ffd700;">(</span><span style="color:#9cdcfe;font-style:italic;">agents_df</span>: pd.DataFrame<span style="color:#ffd700;">)</span> -> <span style="color:#4ec9b0;">tuple</span>:</div><div class="a" style="left:1079.5px;top:754.4px;width:841px;height:251.2px;background:#1f1f1f;border-top:1px solid #2e2e2e"></div><div class="ui" style="left:1100.8px;top:766.5px;font-size:11.3px;color:#9d9d9d;letter-spacing:0.15px">PROBLEMS</div><div class="ui" style="left:1211.3px;top:766.5px;font-size:11.3px;color:#9d9d9d;letter-spacing:0.15px">OUTPUT</div><div class="ui" style="left:1284px;top:766.5px;font-size:11.3px;color:#9d9d9d;letter-spacing:0.15px">DEBUG CONSOLE</div><div class="ui" style="left:1407px;top:766.5px;font-size:11.3px;color:#e8e8e8;letter-spacing:0.15px">TERMINAL</div><div class="ui" style="left:1489px;top:766.5px;font-size:11.3px;color:#9d9d9d;letter-spacing:0.15px">PORTS</div><div class="ui" style="left:1552.5px;top:766.5px;font-size:11.3px;color:#9d9d9d;letter-spacing:0.15px">GITLENS</div><div class="a" style="left:1167.5px;top:765px;width:21.2px;height:16px;border-radius:8px;background:#3d86d8"></div><div class="ui" style="left:1167.5px;top:767.3px;width:21.2px;text-align:center;font-size:11px;font-weight:bold;color:#fff">31</div><div class="a" style="left:1405.3px;top:783.3px;width:60.7px;height:1.5px;background:#3e8ae0"></div><div class="term" style="left:1101px;top:832.65px"><span style="color:#23d18b;font-weight:bold;">✓</span> Validating import alias.</div><div class="term" style="left:1101px;top:847.15px"><span style="color:#23d18b;font-weight:bold;">✓</span> <span style="font-weight:bold;">Which color would you like to use as the </span><span style="color:#29b8db;font-weight:bold;">base color</span><span style="font-weight:bold;">?</span> <span style="color:#888">›</span> Neutral</div><div class="term" style="left:1101px;top:861.65px"><span style="color:#23d18b;font-weight:bold;">✓</span> Writing components.json.</div><div class="term" style="left:1101px;top:876.15px"><span style="color:#23d18b;font-weight:bold;">✓</span> Checking registry.</div><div class="term" style="left:1101px;top:890.65px"><span style="color:#23d18b;font-weight:bold;">✓</span> Updating CSS variables in <span style="color:#29b8db;">src/app/globals.css</span></div><div class="term" style="left:1101px;top:905.15px"><span style="color:#23d18b;font-weight:bold;">✓</span> Installing dependencies.</div><div class="term" style="left:1101px;top:919.65px"><span style="color:#23d18b;font-weight:bold;">✓</span> Created 1 file:</div><div class="term" style="left:1101px;top:934.15px">  - src/components/ui/moving-border.tsx</div><div class="term" style="left:1101px;top:948.65px"><span style="color:#3b8eea;font-weight:bold;">i</span> Skipped 1 files: (files might be identical, use --overwrite to overwrite)</div><div class="term" style="left:1101px;top:963.15px">  - lib/utils.ts</div><div class="term" style="left:1101px;top:991.55px">(base) jins-macbook-pro:jinkim-swe-portfolio-2026 jinkim$ <span style="display:inline-block;width:8px;height:14px;border:1px solid #ccc;vertical-align:-3px"></span></div><svg style="left:1083px;top:989px" width="16" height="16" viewBox="0 0 16 16" fill="none" stroke="#3b8eea" stroke-width="1"><path d="M6 1.5c.5 2.5 1.5 3.5 4 4-2.5.5-3.5 1.5-4 4-.5-2.5-1.5-3.5-4-4 2.5-.5 3.5-1.5 4-4z"/><path d="M12 9.5c.3 1.2.8 1.7 2 2-1.2.3-1.7.8-2 2-.3-1.2-.8-1.7-2-2 1.2-.3 1.7-.8 2-2z"/></svg><div class="a" style="left:1080px;top:799px;width:604px;height:31px;background:#1f1f1f;box-shadow:0 1.5px 2px rgba(0,0,0,0.8)"></div><div class="term" style="left:1101px;top:801.55px">(base) jins-macbook-pro:jinkim-swe-portfolio-2026 jinkim$ npx shadcn@latest add</div><div class="term" style="left:1101px;top:816.05px">@aceternity/moving-border</div><div class="a" style="left:1684px;top:797px;width:13px;height:208px;background:#1f1f1f;border-left:1px solid #2a2a2a"></div><div class="a" style="left:1685px;top:815px;width:3px;height:16px;background:#2d7dd2"></div><div class="a" style="left:1685px;top:866px;width:3px;height:6px;background:#2d7dd2"></div><div class="a" style="left:1685px;top:923px;width:3px;height:6px;background:#2d7dd2"></div><div class="a" style="left:1685px;top:998px;width:4px;height:5px;background:#666"></div><div class="a" style="left:1698.5px;top:790px;width:1px;height:215px;background:#3a3a3a"></div><div class="term" style="left:1720.8px;top:818.65px"> GET / <span style="color:#23d18b;">200</span> in 77ms</div><div class="term" style="left:1720.8px;top:833.12px"> GET / <span style="color:#23d18b;">200</span> in 192ms</div><div class="term" style="left:1720.8px;top:847.59px"> <span style="color:#23d18b;">✓</span> Compiled / in 20ms</div><div class="term" style="left:1720.8px;top:862.06px"> GET / <span style="color:#23d18b;">200</span> in 152ms</div><div class="term" style="left:1720.8px;top:876.53px"> <span style="color:#23d18b;">✓</span> Compiled / in 25ms</div><div class="term" style="left:1720.8px;top:891.0px"> GET / <span style="color:#23d18b;">200</span> in 112ms</div><div class="term" style="left:1720.8px;top:905.47px"> <span style="color:#23d18b;">✓</span> Compiled / in 19ms</div><div class="term" style="left:1720.8px;top:919.9399999999999px"> GET / <span style="color:#23d18b;">200</span> in 147ms</div><div class="term" style="left:1720.8px;top:934.41px"> <span style="color:#23d18b;">✓</span> Compiled / in 12ms</div><div class="term" style="left:1720.8px;top:948.88px"> GET / <span style="color:#23d18b;">200</span> in 85ms</div><div class="term" style="left:1720.8px;top:963.35px"> <span style="color:#23d18b;">✓</span> Compiled / in 12ms</div><div class="term" style="left:1720.8px;top:977.8199999999999px"> GET / <span style="color:#23d18b;">200</span> in 77ms</div><div class="a" style="left:1720.5px;top:991px;width:8px;height:15px;border:1px solid #ccc"></div><div class="a" style="left:1700px;top:799px;width:230px;height:17px;background:#1f1f1f;box-shadow:0 1.5px 2px rgba(0,0,0,0.8)"></div><div class="term" style="left:1720.8px;top:801.75px">(base) jins-macbook-pro:jinkim-swe-portfolio-2026</div><div class="a" style="left:855px;top:1005.6px;width:1065px;height:22px;background:#0b0b0b"></div><div class="a" style="left:855px;top:1005.6px;width:34.7px;height:22px;background:#5d9be0"></div><svg style="left:864.5px;top:1010px" width="15" height="13" viewBox="0 0 15 13" fill="none" stroke="#fff" stroke-width="1.2"><path d="M2 6.5l3.5 3.2-3.5 3.2M13 1l-3.5 3.2L13 7.4"/></svg><svg style="left:897.2px;top:1009.0px" width="15" height="15" viewBox="0 0 24 24" fill="none" stroke="#c6c6c6" stroke-width="1.6" stroke-linecap="round" stroke-linejoin="round"><circle cx="6" cy="4" r="2.2"/><circle cx="6" cy="20" r="2.2"/><circle cx="17" cy="8" r="2.2"/><path d="M6 6.2v11.6M17 10.2c0 4-5 4-10 8"/></svg><div class="ui" style="left:916px;top:1009.5px;font-size:13px;color:#c6c6c6">main</div><svg style="left:949.5px;top:1009.0px" width="15" height="15" viewBox="0 0 24 24" fill="none" stroke="#c6c6c6" stroke-width="1.6" stroke-linecap="round" stroke-linejoin="round"><path d="M4 10a8 8 0 0 1 14-3.5M20 14a8 8 0 0 1-14 3.5"/><path d="M18 3v4h-4M6 21v-4h4"/></svg><svg style="left:980.0px;top:1009.0px" width="15" height="15" viewBox="0 0 24 24" fill="none" stroke="#c6c6c6" stroke-width="1.6" stroke-linecap="round" stroke-linejoin="round"><circle cx="6" cy="5" r="2.5"/><circle cx="6" cy="19" r="2.5"/><circle cx="18" cy="12" r="2.5"/><path d="M6 7.5v9M11 2v20M18 14.5c0 3-3 5-7 5"/></svg><svg style="left:1011.2px;top:1009.0px" width="15" height="15" viewBox="0 0 24 24" fill="none" stroke="#c6c6c6" stroke-width="1.5" stroke-linecap="round" stroke-linejoin="round"><path d="M4 20l3-7 9-9 4 0 0 4-9 9z"/><path d="M7 13l4 4"/><circle cx="15" cy="9" r="1.5"/></svg><svg style="left:1026.5px;top:1010.0px" width="13" height="13" viewBox="0 0 24 24" fill="none" stroke="#c6c6c6" stroke-width="1.6" stroke-linecap="round" stroke-linejoin="round"><path d="M4 20l6-6M14 4l6 0 0 6-8 8-6-6z"/></svg><div class="ui" style="left:1044px;top:1009.5px;font-size:13px;color:#c6c6c6">Launchpad</div><svg style="left:1125.8px;top:1009.5px" width="14" height="14" viewBox="0 0 24 24" fill="none" stroke="#c6c6c6" stroke-width="1.6" stroke-linecap="round" stroke-linejoin="round"><circle cx="12" cy="12" r="10"/><path d="M8.5 8.5l7 7M15.5 8.5l-7 7"/></svg><div class="ui" style="left:1143px;top:1009.5px;font-size:13px;color:#c6c6c6">2</div><svg style="left:1155.5px;top:1009.5px" width="14" height="14" viewBox="0 0 24 24" fill="none" stroke="#c6c6c6" stroke-width="1.6" stroke-linecap="round" stroke-linejoin="round"><path d="M12 2L1.5 21h21z"/><path d="M12 9v6M12 17.5v.5"/></svg><div class="ui" style="left:1173px;top:1009.5px;font-size:13px;color:#c6c6c6">29</div><svg style="left:1205.5px;top:1009.5px" width="14" height="14" viewBox="0 0 24 24" fill="none" stroke="#c6c6c6" stroke-width="1.6" stroke-linecap="round" stroke-linejoin="round"><ellipse cx="12" cy="5" rx="7" ry="2.5"/><path d="M5 5v14c0 1.4 3 2.5 7 2.5s7-1.1 7-2.5V5"/></svg><div class="ui" style="left:1223.4px;top:1009.5px;font-size:13px;color:#c6c6c6">Connect</div><svg style="left:1288.5px;top:1009.0px" width="15" height="15" viewBox="0 0 24 24" fill="none" stroke="#c6c6c6" stroke-width="1.6" stroke-linecap="round" stroke-linejoin="round"><path d="M3 15c0-5 4-8 9-8h3V3.5l6 5.5-6 5.5V11h-3c-4 0-7 1.5-9 4z"/><circle cx="8" cy="19" r="2.5"/></svg><div class="ui" style="left:1307px;top:1009.5px;font-size:13px;color:#c6c6c6">Live Share</div><div class="ui" style="left:1385px;top:1009.5px;font-size:13px;color:#c6c6c6">Git Graph</div><svg style="left:1603.2px;top:1009.5px" width="14" height="14" viewBox="0 0 24 24" fill="none" stroke="#c6c6c6" stroke-width="1.6" stroke-linecap="round" stroke-linejoin="round"><circle cx="12" cy="12" r="4"/><path d="M12 1v7M12 16v7"/></svg><div class="ui" style="left:1622px;top:1009.5px;font-size:13px;color:#c6c6c6">Aidan, 7 months ago</div><div class="ui" style="left:1758.4px;top:1009.5px;font-size:13px;color:#c6c6c6">Ln 94, Col 1</div><div class="ui" style="left:1846.4px;top:1009.5px;font-size:13px;color:#c6c6c6">Spaces: 4</div></div></div></body></html>
